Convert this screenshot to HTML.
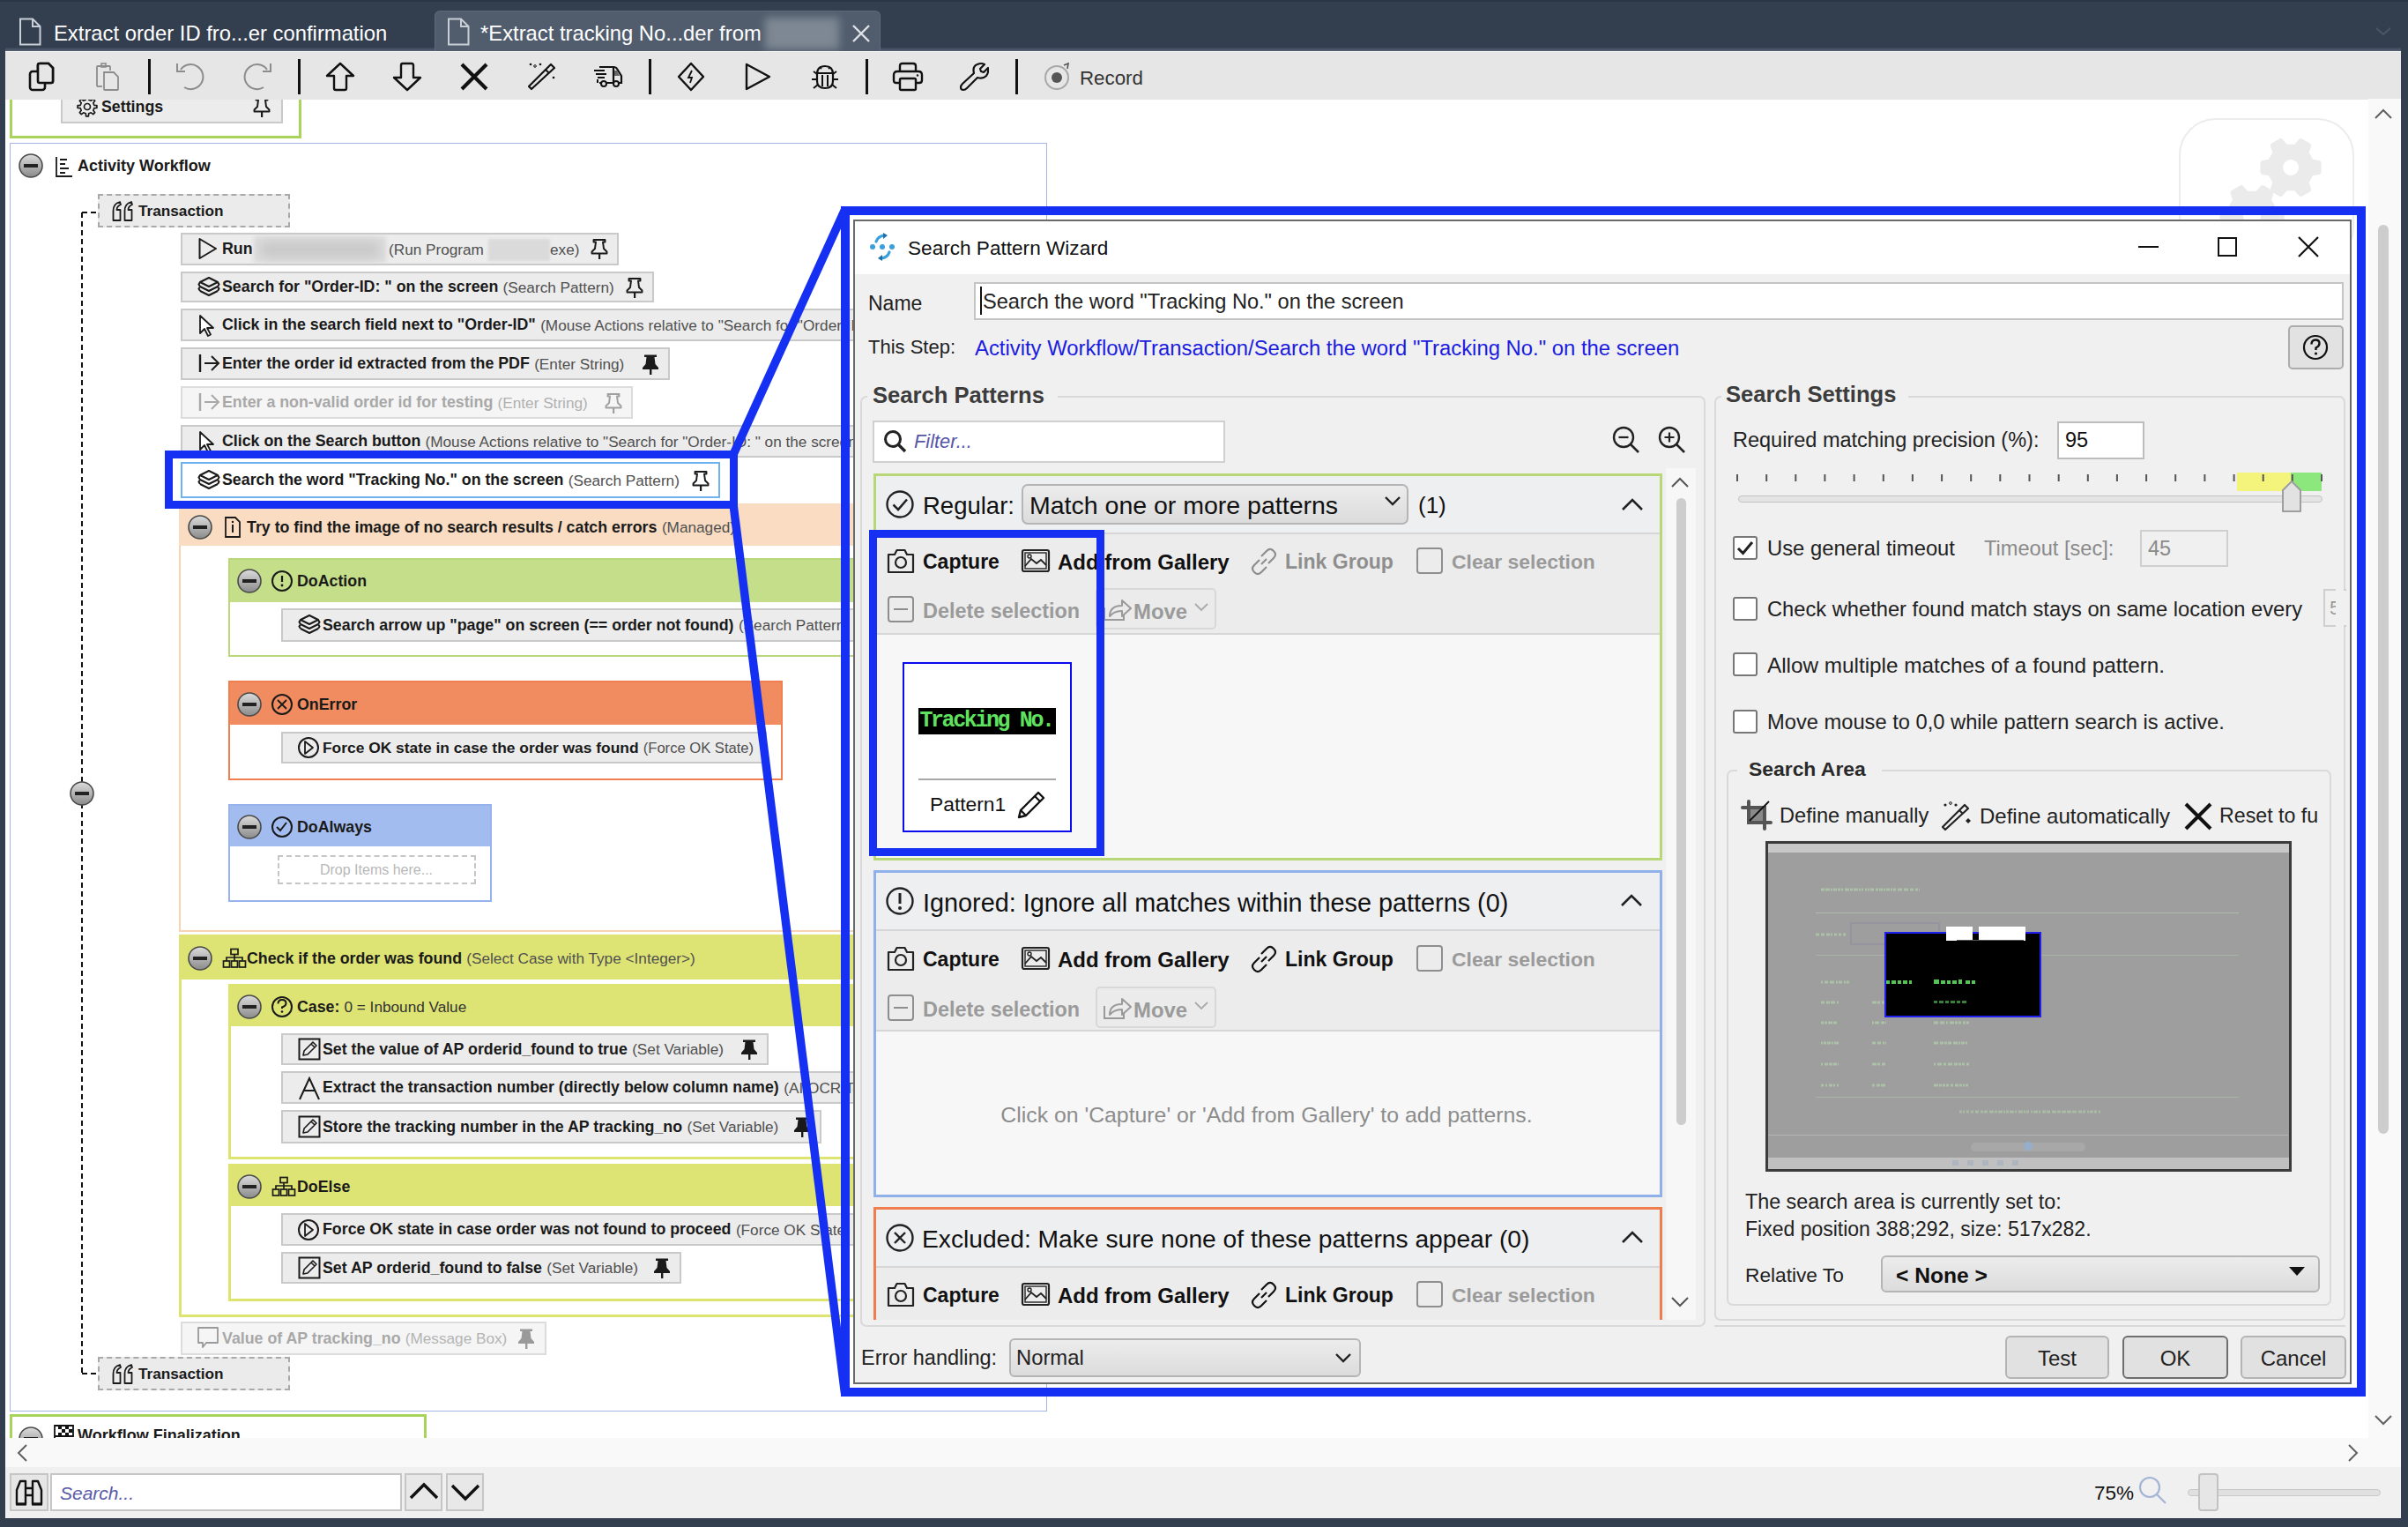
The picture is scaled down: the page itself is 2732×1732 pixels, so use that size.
<!DOCTYPE html><html><head><meta charset="utf-8"><style>
html,body{margin:0;padding:0;width:2732px;height:1732px;overflow:hidden;background:#333e4f;font-family:"Liberation Sans",sans-serif;}
body>div,body>svg{position:absolute;box-sizing:border-box;}
.t{white-space:nowrap;}
</style></head><body>
<div style="left:0px;top:0px;width:2732px;height:1732px;background:#333e4f"></div>
<div style="left:0px;top:0px;width:2732px;height:2px;background:#2b3545"></div>
<div style="left:6px;top:54px;width:2718px;height:5px;background:linear-gradient(#3a4658,#5d697b)"></div>
<div style="left:493px;top:12px;width:506px;height:46px;background:#515d6d;border-radius:6px 6px 0 0;border:1px solid #5e6a7a;border-bottom:none"></div>
<svg style="position:absolute;left:21px;top:20px;" width="26" height="32" viewBox="0 0 26 32"><path d="M2 1.5 H16 L24.5 10 V30.5 H2 Z" fill="none" stroke="#c9cfd6" stroke-width="2"/><path d="M16 1.5 V10 H24.5" fill="none" stroke="#c9cfd6" stroke-width="2"/></svg>
<svg style="position:absolute;left:507px;top:20px;" width="26" height="32" viewBox="0 0 26 32"><path d="M2 1.5 H16 L24.5 10 V30.5 H2 Z" fill="none" stroke="#c9cfd6" stroke-width="2"/><path d="M16 1.5 V10 H24.5" fill="none" stroke="#c9cfd6" stroke-width="2"/></svg>
<div class="t" style="left:61px;top:23.0px;height:30px;line-height:30px;font-size:23.8px;font-weight:400;color:#fff;">Extract order ID fro...er confirmation</div>
<div class="t" style="left:545px;top:23.0px;height:30px;line-height:30px;font-size:23.8px;font-weight:400;color:#fff;">*Extract tracking No...der from</div>
<div style="left:868px;top:20px;width:84px;height:36px;background:#8a939e;filter:blur(5px);opacity:.8"></div>
<svg style="position:absolute;left:965px;top:26px;" width="24" height="24" viewBox="0 0 24 24"><path d="M3 3 L21 21 M21 3 L3 21" stroke="#dfe3e8" stroke-width="2.4"/></svg>
<svg style="position:absolute;left:2694px;top:30px;" width="20" height="12" viewBox="0 0 20 12"><path d="M2 2 L10 9 L18 2" fill="none" stroke="#4b5666" stroke-width="2"/></svg>
<div style="left:6px;top:58px;width:2718px;height:1664px;background:#ffffff"></div>
<div style="left:11px;top:100px;width:331px;height:57px;border:3px solid #a8d45c;border-top:none;background:#fff"></div>
<div style="left:69px;top:100px;width:252px;height:40px;background:#ececec;border:2px solid #c9c9c9;border-top:none"></div>
<svg style="position:absolute;left:87px;top:109px;" width="24" height="24" viewBox="0 0 24 24"><polygon points="19.8,10.3 22.9,10.6 22.9,13.4 19.8,13.7 18.8,16.3 20.7,18.7 18.7,20.7 16.3,18.8 13.7,19.8 13.4,22.9 10.6,22.9 10.3,19.8 7.7,18.8 5.3,20.7 3.3,18.7 5.2,16.3 4.2,13.7 1.1,13.4 1.1,10.6 4.2,10.3 5.2,7.7 3.3,5.3 5.3,3.3 7.7,5.2 10.3,4.2 10.6,1.1 13.4,1.1 13.7,4.2 16.3,5.2 18.7,3.3 20.7,5.3 18.8,7.7" fill="none" stroke="#1a1a1a" stroke-width="1.7" stroke-linejoin="round"/><circle cx="12" cy="12" r="3.5" fill="none" stroke="#1a1a1a" stroke-width="1.7"/></svg>
<div class="t" style="left:115px;top:109.5px;height:23px;line-height:23px;font-size:17.8px;font-weight:700;color:#1a1a1a;">Settings</div>
<svg style="position:absolute;left:287px;top:109px;" width="20" height="25" viewBox="0 0 20 25"><path d="M3.5 2 H16.5 V4.5 H14 L15 12 L18.5 15.5 V17.5 H1.5 V15.5 L5 12 L6 4.5 H3.5 Z" fill="none" stroke="#1a1a1a" stroke-width="1.9" stroke-linejoin="round"/><rect x="9" y="17" width="2.2" height="7" fill="#1a1a1a"/></svg>
<div style="left:11px;top:162px;width:1177px;height:1439px;border:1.5px solid #a3b6e2"></div>
<svg style="position:absolute;left:21px;top:174px;" width="28" height="28" viewBox="0 0 28 28"><defs><linearGradient id="mg" x1="0" y1="0" x2="0" y2="1"><stop offset="0" stop-color="#dcdcdc"/><stop offset="1" stop-color="#8a8a8a"/></linearGradient></defs><circle cx="14" cy="14" r="13" fill="url(#mg)" stroke="#4a4a4a" stroke-width="1.6"/><rect x="6" y="12" width="16" height="4" fill="#222"/></svg>
<svg style="position:absolute;left:62px;top:176px;" width="22" height="26" viewBox="0 0 22 26"><path d="M2 2 V24 H20 M6 5 H14 M6 10 H12 M6 15 H16 M6 20 H12" fill="none" stroke="#1a1a1a" stroke-width="1.8"/></svg>
<div class="t" style="left:88px;top:176.5px;height:23px;line-height:23px;font-size:18px;font-weight:700;color:#1a1a1a;">Activity Workflow</div>
<div style="left:111px;top:220px;width:218px;height:38px;background:#ebebeb;border:2px dashed #a9a9a9"></div>
<svg style="position:absolute;left:126px;top:226px;" width="28" height="26" viewBox="0 0 28 26"><path d="M2.5 24 V13 Q2.5 5 10 3 L11 6 Q6.5 8 6.5 12 H10.5 V24 Z M15.5 24 V13 Q15.5 5 23 3 L24 6 Q19.5 8 19.5 12 H23.5 V24 Z" fill="none" stroke="#1a1a1a" stroke-width="1.8" stroke-linejoin="round"/></svg>
<div class="t" style="left:157px;top:228.0px;height:22px;line-height:22px;font-size:17.2px;font-weight:700;color:#1a1a1a;">Transaction</div>
<div style="left:111px;top:1539px;width:218px;height:38px;background:#ebebeb;border:2px dashed #a9a9a9"></div>
<svg style="position:absolute;left:126px;top:1545px;" width="28" height="26" viewBox="0 0 28 26"><path d="M2.5 24 V13 Q2.5 5 10 3 L11 6 Q6.5 8 6.5 12 H10.5 V24 Z M15.5 24 V13 Q15.5 5 23 3 L24 6 Q19.5 8 19.5 12 H23.5 V24 Z" fill="none" stroke="#1a1a1a" stroke-width="1.8" stroke-linejoin="round"/></svg>
<div class="t" style="left:157px;top:1547.0px;height:22px;line-height:22px;font-size:17.2px;font-weight:700;color:#1a1a1a;">Transaction</div>
<svg style="position:absolute;left:0;top:0" width="2732" height="1732"><path d="M93 241 V1558 M93 241 H111 M93 1558 H111" fill="none" stroke="#111" stroke-width="2" stroke-dasharray="6 4"/></svg>
<svg style="position:absolute;left:79px;top:886px;" width="28" height="28" viewBox="0 0 28 28"><defs><linearGradient id="mg" x1="0" y1="0" x2="0" y2="1"><stop offset="0" stop-color="#dcdcdc"/><stop offset="1" stop-color="#8a8a8a"/></linearGradient></defs><circle cx="14" cy="14" r="13" fill="url(#mg)" stroke="#4a4a4a" stroke-width="1.6"/><rect x="6" y="12" width="16" height="4" fill="#222"/></svg>
<div style="left:205px;top:264px;width:497px;height:37px;background:#ececec;border:2px solid #c9c9c9"></div>
<svg style="position:absolute;left:224px;top:269px;" width="24" height="26" viewBox="0 0 24 26"><path d="M2.5 2 L21 13 L2.5 24 Z" fill="none" stroke="#1a1a1a" stroke-width="2" stroke-linejoin="round"/></svg>
<div class="t" style="left:252px;top:271.0px;height:23px;line-height:23px;font-size:17.8px;font-weight:700;color:#1a1a1a;">Run</div>
<div style="left:288px;top:268px;width:150px;height:30px;background:#dcdcdc;filter:blur(2px)"></div>
<div style="left:296px;top:274px;width:134px;height:18px;background:#c4c4c4;filter:blur(6px);opacity:.8"></div>
<div class="t" style="left:441px;top:271.5px;height:22px;line-height:22px;font-size:17.2px;font-weight:400;color:#505050;">(Run Program</div>
<div style="left:554px;top:271px;width:70px;height:25px;background:#dadada;filter:blur(1.5px)"></div>
<div class="t" style="left:624px;top:271.5px;height:22px;line-height:22px;font-size:17.2px;font-weight:400;color:#505050;">exe)</div>
<svg style="position:absolute;left:670px;top:270px;" width="20" height="25" viewBox="0 0 20 25"><path d="M3.5 2 H16.5 V4.5 H14 L15 12 L18.5 15.5 V17.5 H1.5 V15.5 L5 12 L6 4.5 H3.5 Z" fill="none" stroke="#1a1a1a" stroke-width="1.9" stroke-linejoin="round"/><rect x="9" y="17" width="2.2" height="7" fill="#1a1a1a"/></svg>
<div style="left:205px;top:308px;width:537px;height:35px;background:#ececec;border:2px solid #c9c9c9"></div>
<svg style="position:absolute;left:224px;top:312.5px;" width="26" height="26" viewBox="0 0 26 26"><path d="M13 2 L23 7 L13 12 L3 7 Z M3 12 L13 17 L23 12 M3 17 L13 22 L23 17" fill="none" stroke="#1a1a1a" stroke-width="2" stroke-linejoin="round"/><path d="M3 7 L1.5 9.5 L3 12 M23 7 L24.5 9.5 L23 12 M3 12 L1.5 14.5 L3 17 M23 12 L24.5 14.5 L23 17" fill="none" stroke="#1a1a1a" stroke-width="2"/></svg>
<div class="t" style="left:252px;top:314.0px;height:23px;line-height:23px;font-size:17.8px;font-weight:700;color:#1a1a1a;">Search for &quot;Order-ID: &quot; on the screen</div>
<div class="t" style="left:570.621815625px;top:314.5px;height:22px;line-height:22px;font-size:17.2px;font-weight:400;color:#505050;">(Search Pattern)</div>
<svg style="position:absolute;left:710px;top:313.5px;" width="20" height="25" viewBox="0 0 20 25"><path d="M3.5 2 H16.5 V4.5 H14 L15 12 L18.5 15.5 V17.5 H1.5 V15.5 L5 12 L6 4.5 H3.5 Z" fill="none" stroke="#1a1a1a" stroke-width="1.9" stroke-linejoin="round"/><rect x="9" y="17" width="2.2" height="7" fill="#1a1a1a"/></svg>
<div style="left:205px;top:350px;width:945px;height:37px;background:#ececec;border:2px solid #c9c9c9"></div>
<svg style="position:absolute;left:224px;top:355.5px;" width="22" height="28" viewBox="0 0 22 28"><path d="M3 2 V22 L8 17 L12 25 L15 23.5 L11 16 L18 16 Z" fill="#fff" stroke="#1a1a1a" stroke-width="1.8" stroke-linejoin="round"/></svg>
<div class="t" style="left:252px;top:357.0px;height:23px;line-height:23px;font-size:17.8px;font-weight:700;color:#1a1a1a;">Click in the search field next to &quot;Order-ID&quot;</div>
<div class="t" style="left:613.148796875px;top:357.5px;height:22px;line-height:22px;font-size:17.2px;font-weight:400;color:#505050;">(Mouse Actions relative to &quot;Search for &quot;Order-ID: &quot; on the screen&quot;)</div>
<div style="left:205px;top:394px;width:555px;height:37px;background:#ececec;border:2px solid #c9c9c9"></div>
<svg style="position:absolute;left:224px;top:399.5px;" width="30" height="24" viewBox="0 0 30 24"><path d="M3 2 V22" stroke="#1a1a1a" stroke-width="2.4"/><path d="M8 12 H23 M16 4 L24 12 L16 20" fill="none" stroke="#1a1a1a" stroke-width="2"/></svg>
<div class="t" style="left:252px;top:401.0px;height:23px;line-height:23px;font-size:17.8px;font-weight:700;color:#1a1a1a;">Enter the order id extracted from the PDF</div>
<div class="t" style="left:606.1439406249999px;top:401.5px;height:22px;line-height:22px;font-size:17.2px;font-weight:400;color:#505050;">(Enter String)</div>
<svg style="position:absolute;left:728px;top:400.5px;" width="20" height="25" viewBox="0 0 20 25"><path d="M3 1.5 H17 V4 H14.5 L15.5 12 L19 16 V18 H1 V16 L4.5 12 L5.5 4 H3 Z" fill="#1a1a1a"/><rect x="9" y="17" width="2.4" height="7" fill="#1a1a1a"/></svg>
<div style="left:205px;top:438px;width:513px;height:37px;background:#f5f5f5;border:2px solid #dcdcdc"></div>
<svg style="position:absolute;left:224px;top:443.5px;" width="30" height="24" viewBox="0 0 30 24"><path d="M3 2 V22" stroke="#a8a8a8" stroke-width="2.4"/><path d="M8 12 H23 M16 4 L24 12 L16 20" fill="none" stroke="#a8a8a8" stroke-width="2"/></svg>
<div class="t" style="left:252px;top:445.0px;height:23px;line-height:23px;font-size:17.8px;font-weight:700;color:#a8a8a8;">Enter a non-valid order id for testing</div>
<div class="t" style="left:564.572596875px;top:445.5px;height:22px;line-height:22px;font-size:17.2px;font-weight:400;color:#b0b0b0;">(Enter String)</div>
<svg style="position:absolute;left:686px;top:444.5px;" width="20" height="25" viewBox="0 0 20 25"><path d="M3.5 2 H16.5 V4.5 H14 L15 12 L18.5 15.5 V17.5 H1.5 V15.5 L5 12 L6 4.5 H3.5 Z" fill="none" stroke="#a0a0a0" stroke-width="1.9" stroke-linejoin="round"/><rect x="9" y="17" width="2.2" height="7" fill="#a0a0a0"/></svg>
<div style="left:205px;top:482px;width:945px;height:37px;background:#ececec;border:2px solid #c9c9c9"></div>
<svg style="position:absolute;left:224px;top:487.5px;" width="22" height="28" viewBox="0 0 22 28"><path d="M3 2 V22 L8 17 L12 25 L15 23.5 L11 16 L18 16 Z" fill="#fff" stroke="#1a1a1a" stroke-width="1.8" stroke-linejoin="round"/></svg>
<div class="t" style="left:252px;top:489.0px;height:23px;line-height:23px;font-size:17.8px;font-weight:700;color:#1a1a1a;">Click on the Search button</div>
<div class="t" style="left:482.49095625px;top:489.5px;height:22px;line-height:22px;font-size:17.2px;font-weight:400;color:#505050;">(Mouse Actions relative to &quot;Search for &quot;Order-ID: &quot; on the screen&quot;)</div>
<div style="left:205px;top:524px;width:612px;height:41px;background:#ffffff;border:2px solid #6fb2f2"></div>
<svg style="position:absolute;left:224px;top:531.5px;" width="26" height="26" viewBox="0 0 26 26"><path d="M13 2 L23 7 L13 12 L3 7 Z M3 12 L13 17 L23 12 M3 17 L13 22 L23 17" fill="none" stroke="#1a1a1a" stroke-width="2" stroke-linejoin="round"/><path d="M3 7 L1.5 9.5 L3 12 M23 7 L24.5 9.5 L23 12 M3 12 L1.5 14.5 L3 17 M23 12 L24.5 14.5 L23 17" fill="none" stroke="#1a1a1a" stroke-width="2"/></svg>
<div class="t" style="left:252px;top:533.0px;height:23px;line-height:23px;font-size:17.8px;font-weight:700;color:#1a1a1a;">Search the word &quot;Tracking No.&quot; on the screen</div>
<div class="t" style="left:644.8119375px;top:533.5px;height:22px;line-height:22px;font-size:17.2px;font-weight:400;color:#505050;">(Search Pattern)</div>
<svg style="position:absolute;left:785px;top:532.5px;" width="20" height="25" viewBox="0 0 20 25"><path d="M3.5 2 H16.5 V4.5 H14 L15 12 L18.5 15.5 V17.5 H1.5 V15.5 L5 12 L6 4.5 H3.5 Z" fill="none" stroke="#1a1a1a" stroke-width="1.9" stroke-linejoin="round"/><rect x="9" y="17" width="2.2" height="7" fill="#1a1a1a"/></svg>
<div style="left:203px;top:571px;width:947px;height:486px;border:2px solid #f7d3b3;border-right:none;background:#fff"></div>
<div style="left:203px;top:571px;width:947px;height:48px;background:#f9dcc1"></div>
<svg style="position:absolute;left:213px;top:584px;" width="28" height="28" viewBox="0 0 28 28"><defs><linearGradient id="mg" x1="0" y1="0" x2="0" y2="1"><stop offset="0" stop-color="#dcdcdc"/><stop offset="1" stop-color="#8a8a8a"/></linearGradient></defs><circle cx="14" cy="14" r="13" fill="url(#mg)" stroke="#4a4a4a" stroke-width="1.6"/><rect x="6" y="12" width="16" height="4" fill="#222"/></svg>
<svg style="position:absolute;left:254px;top:585px;" width="20" height="26" viewBox="0 0 20 26"><path d="M2 2 H13 L18 7 V24 H2 Z" fill="none" stroke="#1a1a1a" stroke-width="1.8"/><path d="M10 10 V19" stroke="#1a1a1a" stroke-width="2"/><circle cx="10" cy="7" r="1.2" fill="#1a1a1a"/></svg>
<div class="t" style="left:280px;top:586.5px;height:23px;line-height:23px;font-size:17.8px;font-weight:700;color:#1a1a1a;">Try to find the image of no search results / catch errors</div>
<div class="t" style="left:750.89553125px;top:587.0px;height:22px;line-height:22px;font-size:17.2px;font-weight:400;color:#505050;">(Managed)</div>
<div style="left:259px;top:633px;width:891px;height:112px;border:2px solid #b9d87c;background:#fff;border-right:none;"></div>
<div style="left:259px;top:633px;width:891px;height:50px;background:#c5de89;border:2px solid #b9d87c;border-bottom:none;border-right:none;"></div>
<svg style="position:absolute;left:269px;top:645px;" width="28" height="28" viewBox="0 0 28 28"><defs><linearGradient id="mg" x1="0" y1="0" x2="0" y2="1"><stop offset="0" stop-color="#dcdcdc"/><stop offset="1" stop-color="#8a8a8a"/></linearGradient></defs><circle cx="14" cy="14" r="13" fill="url(#mg)" stroke="#4a4a4a" stroke-width="1.6"/><rect x="6" y="12" width="16" height="4" fill="#222"/></svg>
<svg style="position:absolute;left:307px;top:646px;" width="26" height="26" viewBox="0 0 26 26"><circle cx="13" cy="13" r="11" fill="none" stroke="#1a1a1a" stroke-width="2"/><path d="M13 7 V14" stroke="#1a1a1a" stroke-width="2.2"/><circle cx="13" cy="18" r="1.4" fill="#1a1a1a"/></svg>
<div class="t" style="left:337px;top:647.5px;height:23px;line-height:23px;font-size:17.8px;font-weight:700;color:#1a1a1a;">DoAction</div>
<div style="left:319px;top:690px;width:831px;height:38px;background:#ececec;border:2px solid #c9c9c9"></div>
<svg style="position:absolute;left:338px;top:696.0px;" width="26" height="26" viewBox="0 0 26 26"><path d="M13 2 L23 7 L13 12 L3 7 Z M3 12 L13 17 L23 12 M3 17 L13 22 L23 17" fill="none" stroke="#1a1a1a" stroke-width="2" stroke-linejoin="round"/><path d="M3 7 L1.5 9.5 L3 12 M23 7 L24.5 9.5 L23 12 M3 12 L1.5 14.5 L3 17 M23 12 L24.5 14.5 L23 17" fill="none" stroke="#1a1a1a" stroke-width="2"/></svg>
<div class="t" style="left:366px;top:697.5px;height:23px;line-height:23px;font-size:17.8px;font-weight:700;color:#1a1a1a;">Search arrow up &quot;page&quot; on screen (== order not found)</div>
<div class="t" style="left:837.9040125px;top:698.0px;height:22px;line-height:22px;font-size:17.2px;font-weight:400;color:#505050;">(Search Pattern)</div>
<div style="left:259px;top:772px;width:629px;height:113px;border:2px solid #f07e4f;background:#fff;"></div>
<div style="left:259px;top:772px;width:629px;height:50px;background:#f08c5f;border:2px solid #f07e4f;border-bottom:none;"></div>
<svg style="position:absolute;left:269px;top:785px;" width="28" height="28" viewBox="0 0 28 28"><defs><linearGradient id="mg" x1="0" y1="0" x2="0" y2="1"><stop offset="0" stop-color="#dcdcdc"/><stop offset="1" stop-color="#8a8a8a"/></linearGradient></defs><circle cx="14" cy="14" r="13" fill="url(#mg)" stroke="#4a4a4a" stroke-width="1.6"/><rect x="6" y="12" width="16" height="4" fill="#222"/></svg>
<svg style="position:absolute;left:307px;top:786px;" width="26" height="26" viewBox="0 0 26 26"><circle cx="13" cy="13" r="11" fill="none" stroke="#1a1a1a" stroke-width="2"/><path d="M8 8 L18 18 M18 8 L8 18" stroke="#1a1a1a" stroke-width="1.8"/></svg>
<div class="t" style="left:337px;top:787.5px;height:23px;line-height:23px;font-size:17.8px;font-weight:700;color:#1a1a1a;">OnError</div>
<div style="left:319px;top:830px;width:551px;height:36px;background:#ececec;border:2px solid #c9c9c9"></div>
<svg style="position:absolute;left:337px;top:835px;" width="26" height="26" viewBox="0 0 26 26"><circle cx="13" cy="13" r="11" fill="none" stroke="#1a1a1a" stroke-width="2"/><path d="M9 6 L18 13 L9 20 Z" fill="none" stroke="#1a1a1a" stroke-width="1.8" stroke-linejoin="round"/></svg>
<div class="t" style="left:366px;top:837.0px;height:22px;line-height:22px;font-size:17.4px;font-weight:700;color:#1a1a1a;">Force OK state in case the order was found</div>
<div class="t" style="left:729.7232937499999px;top:837.5px;height:21px;line-height:21px;font-size:16.6px;font-weight:400;color:#505050;">(Force OK State)</div>
<div style="left:259px;top:912px;width:299px;height:111px;border:2px solid #97b3ee;background:#fff;"></div>
<div style="left:259px;top:912px;width:299px;height:48px;background:#a3bcf0;border:2px solid #97b3ee;border-bottom:none;"></div>
<svg style="position:absolute;left:269px;top:924px;" width="28" height="28" viewBox="0 0 28 28"><defs><linearGradient id="mg" x1="0" y1="0" x2="0" y2="1"><stop offset="0" stop-color="#dcdcdc"/><stop offset="1" stop-color="#8a8a8a"/></linearGradient></defs><circle cx="14" cy="14" r="13" fill="url(#mg)" stroke="#4a4a4a" stroke-width="1.6"/><rect x="6" y="12" width="16" height="4" fill="#222"/></svg>
<svg style="position:absolute;left:307px;top:925px;" width="26" height="26" viewBox="0 0 26 26"><circle cx="13" cy="13" r="11" fill="none" stroke="#1a1a1a" stroke-width="2"/><path d="M7 13 L11 17 L18 8" fill="none" stroke="#1a1a1a" stroke-width="2"/></svg>
<div class="t" style="left:337px;top:926.5px;height:23px;line-height:23px;font-size:17.8px;font-weight:700;color:#1a1a1a;">DoAlways</div>
<div style="left:315px;top:970px;width:225px;height:33px;border:2px dashed #c6c6c6;background:#fff"></div>
<div class="t" style="left:-573px;width:2000px;text-align:center;top:976.5px;height:20px;line-height:20px;font-size:16px;font-weight:400;color:#b8b8b8;">Drop Items here...</div>
<div style="left:203px;top:1060px;width:947px;height:434px;border:3px solid #dde46f;border-right:none;background:#fff"></div>
<div style="left:203px;top:1060px;width:947px;height:51px;background:#dee474"></div>
<svg style="position:absolute;left:213px;top:1073px;" width="28" height="28" viewBox="0 0 28 28"><defs><linearGradient id="mg" x1="0" y1="0" x2="0" y2="1"><stop offset="0" stop-color="#dcdcdc"/><stop offset="1" stop-color="#8a8a8a"/></linearGradient></defs><circle cx="14" cy="14" r="13" fill="url(#mg)" stroke="#4a4a4a" stroke-width="1.6"/><rect x="6" y="12" width="16" height="4" fill="#222"/></svg>
<svg style="position:absolute;left:252px;top:1075px;" width="28" height="24" viewBox="0 0 28 24"><rect x="10" y="1.5" width="8" height="6" fill="none" stroke="#1a1a1a" stroke-width="1.7"/><path d="M14 7.5 V11 M5 15 V11 H23 V15 M14 11 V15" fill="none" stroke="#1a1a1a" stroke-width="1.7"/><rect x="1.5" y="15" width="7" height="7" fill="none" stroke="#1a1a1a" stroke-width="1.7"/><rect x="10.5" y="15" width="7" height="7" fill="none" stroke="#1a1a1a" stroke-width="1.7"/><rect x="19.5" y="15" width="7" height="7" fill="none" stroke="#1a1a1a" stroke-width="1.7"/></svg>
<div class="t" style="left:280px;top:1075.5px;height:23px;line-height:23px;font-size:17.8px;font-weight:700;color:#1a1a1a;">Check if the order was found</div>
<div class="t" style="left:529.290259375px;top:1076.0px;height:22px;line-height:22px;font-size:17.2px;font-weight:400;color:#505050;">(Select Case with Type &lt;Integer&gt;)</div>
<div style="left:259px;top:1116px;width:891px;height:199px;border:3px solid #dde46f;background:#fff;border-right:none;"></div>
<div style="left:259px;top:1116px;width:891px;height:48px;background:#dee474;border:3px solid #dde46f;border-bottom:none;border-right:none;"></div>
<svg style="position:absolute;left:269px;top:1128px;" width="28" height="28" viewBox="0 0 28 28"><defs><linearGradient id="mg" x1="0" y1="0" x2="0" y2="1"><stop offset="0" stop-color="#dcdcdc"/><stop offset="1" stop-color="#8a8a8a"/></linearGradient></defs><circle cx="14" cy="14" r="13" fill="url(#mg)" stroke="#4a4a4a" stroke-width="1.6"/><rect x="6" y="12" width="16" height="4" fill="#222"/></svg>
<svg style="position:absolute;left:307px;top:1129px;" width="26" height="26" viewBox="0 0 26 26"><circle cx="13" cy="13" r="11" fill="none" stroke="#1a1a1a" stroke-width="2"/><path d="M8.5 9.5 Q8.5 5 13 5 Q17.5 5 17.5 9 Q17.5 12 13 13.5 V15" fill="none" stroke="#1a1a1a" stroke-width="2"/><circle cx="13" cy="18.5" r="1.3" fill="#1a1a1a"/></svg>
<div class="t" style="left:337px;top:1130.5px;height:23px;line-height:23px;font-size:17.8px;font-weight:700;color:#1a1a1a;">Case:</div>
<div class="t" style="left:390.48108125px;top:1131.0px;height:22px;line-height:22px;font-size:17.2px;font-weight:400;color:#333;">0 = Inbound Value</div>
<div style="left:319px;top:1172px;width:553px;height:36px;background:#ececec;border:2px solid #c9c9c9"></div>
<svg style="position:absolute;left:338px;top:1177.0px;" width="26" height="26" viewBox="0 0 26 26"><rect x="1.5" y="1.5" width="23" height="23" fill="none" stroke="#1a1a1a" stroke-width="2"/><path d="M6 20 L7 15 L17 5 L21 9 L11 19 Z M15 7 L19 11" fill="none" stroke="#1a1a1a" stroke-width="1.6" stroke-linejoin="round"/></svg>
<div class="t" style="left:366px;top:1178.5px;height:23px;line-height:23px;font-size:17.8px;font-weight:700;color:#1a1a1a;">Set the value of AP orderid_found to true</div>
<div class="t" style="left:717.145753125px;top:1179.0px;height:22px;line-height:22px;font-size:17.2px;font-weight:400;color:#505050;">(Set Variable)</div>
<svg style="position:absolute;left:840px;top:1178.0px;" width="20" height="25" viewBox="0 0 20 25"><path d="M3 1.5 H17 V4 H14.5 L15.5 12 L19 16 V18 H1 V16 L4.5 12 L5.5 4 H3 Z" fill="#1a1a1a"/><rect x="9" y="17" width="2.4" height="7" fill="#1a1a1a"/></svg>
<div style="left:319px;top:1215px;width:831px;height:37px;background:#ececec;border:2px solid #c9c9c9"></div>
<svg style="position:absolute;left:338px;top:1220.5px;" width="26" height="28" viewBox="0 0 26 28"><path d="M2 26 L13 2 L24 26 M7 16 H19" fill="none" stroke="#1a1a1a" stroke-width="2"/></svg>
<div class="t" style="left:366px;top:1222.0px;height:23px;line-height:23px;font-size:17.8px;font-weight:700;color:#1a1a1a;">Extract the transaction number (directly below column name)</div>
<div class="t" style="left:889.287884375px;top:1222.5px;height:22px;line-height:22px;font-size:17.2px;font-weight:400;color:#505050;">(AI OCR Text)</div>
<div style="left:319px;top:1259px;width:613px;height:38px;background:#ececec;border:2px solid #c9c9c9"></div>
<svg style="position:absolute;left:338px;top:1265.0px;" width="26" height="26" viewBox="0 0 26 26"><rect x="1.5" y="1.5" width="23" height="23" fill="none" stroke="#1a1a1a" stroke-width="2"/><path d="M6 20 L7 15 L17 5 L21 9 L11 19 Z M15 7 L19 11" fill="none" stroke="#1a1a1a" stroke-width="1.6" stroke-linejoin="round"/></svg>
<div class="t" style="left:366px;top:1266.5px;height:23px;line-height:23px;font-size:17.8px;font-weight:700;color:#1a1a1a;">Store the tracking number in the AP tracking_no</div>
<div class="t" style="left:779.489140625px;top:1267.0px;height:22px;line-height:22px;font-size:17.2px;font-weight:400;color:#505050;">(Set Variable)</div>
<svg style="position:absolute;left:900px;top:1266.0px;" width="20" height="25" viewBox="0 0 20 25"><path d="M3 1.5 H17 V4 H14.5 L15.5 12 L19 16 V18 H1 V16 L4.5 12 L5.5 4 H3 Z" fill="#1a1a1a"/><rect x="9" y="17" width="2.4" height="7" fill="#1a1a1a"/></svg>
<div style="left:259px;top:1320px;width:891px;height:156px;border:3px solid #dde46f;background:#fff;border-right:none;"></div>
<div style="left:259px;top:1320px;width:891px;height:48px;background:#dee474;border:3px solid #dde46f;border-bottom:none;border-right:none;"></div>
<svg style="position:absolute;left:269px;top:1332px;" width="28" height="28" viewBox="0 0 28 28"><defs><linearGradient id="mg" x1="0" y1="0" x2="0" y2="1"><stop offset="0" stop-color="#dcdcdc"/><stop offset="1" stop-color="#8a8a8a"/></linearGradient></defs><circle cx="14" cy="14" r="13" fill="url(#mg)" stroke="#4a4a4a" stroke-width="1.6"/><rect x="6" y="12" width="16" height="4" fill="#222"/></svg>
<svg style="position:absolute;left:308px;top:1334px;" width="28" height="24" viewBox="0 0 28 24"><rect x="10" y="1.5" width="8" height="6" fill="none" stroke="#1a1a1a" stroke-width="1.7"/><path d="M14 7.5 V11 M5 15 V11 H23 V15 M14 11 V15" fill="none" stroke="#1a1a1a" stroke-width="1.7"/><rect x="1.5" y="15" width="7" height="7" fill="none" stroke="#1a1a1a" stroke-width="1.7"/><rect x="10.5" y="15" width="7" height="7" fill="none" stroke="#1a1a1a" stroke-width="1.7"/><rect x="19.5" y="15" width="7" height="7" fill="none" stroke="#1a1a1a" stroke-width="1.7"/></svg>
<div class="t" style="left:337px;top:1334.5px;height:23px;line-height:23px;font-size:17.8px;font-weight:700;color:#1a1a1a;">DoElse</div>
<div style="left:319px;top:1376px;width:831px;height:37px;background:#ececec;border:2px solid #c9c9c9"></div>
<svg style="position:absolute;left:337px;top:1381.5px;" width="26" height="26" viewBox="0 0 26 26"><circle cx="13" cy="13" r="11" fill="none" stroke="#1a1a1a" stroke-width="2"/><path d="M9 6 L18 13 L9 20 Z" fill="none" stroke="#1a1a1a" stroke-width="1.8" stroke-linejoin="round"/></svg>
<div class="t" style="left:366px;top:1383.0px;height:23px;line-height:23px;font-size:17.8px;font-weight:700;color:#1a1a1a;">Force OK state in case order was not found to proceed</div>
<div class="t" style="left:834.879403125px;top:1383.5px;height:22px;line-height:22px;font-size:17.2px;font-weight:400;color:#505050;">(Force OK State)</div>
<div style="left:319px;top:1420px;width:454px;height:36px;background:#ececec;border:2px solid #c9c9c9"></div>
<svg style="position:absolute;left:338px;top:1425.0px;" width="26" height="26" viewBox="0 0 26 26"><rect x="1.5" y="1.5" width="23" height="23" fill="none" stroke="#1a1a1a" stroke-width="2"/><path d="M6 20 L7 15 L17 5 L21 9 L11 19 Z M15 7 L19 11" fill="none" stroke="#1a1a1a" stroke-width="1.6" stroke-linejoin="round"/></svg>
<div class="t" style="left:366px;top:1426.5px;height:23px;line-height:23px;font-size:17.8px;font-weight:700;color:#1a1a1a;">Set AP orderid_found to false</div>
<div class="t" style="left:620.23615625px;top:1427.0px;height:22px;line-height:22px;font-size:17.2px;font-weight:400;color:#505050;">(Set Variable)</div>
<svg style="position:absolute;left:741px;top:1426.0px;" width="20" height="25" viewBox="0 0 20 25"><path d="M3 1.5 H17 V4 H14.5 L15.5 12 L19 16 V18 H1 V16 L4.5 12 L5.5 4 H3 Z" fill="#1a1a1a"/><rect x="9" y="17" width="2.4" height="7" fill="#1a1a1a"/></svg>
<div style="left:205px;top:1499px;width:415px;height:38px;background:#f5f5f5;border:2px solid #dcdcdc"></div>
<svg style="position:absolute;left:222px;top:1503px;" width="28" height="28" viewBox="0 0 28 28"><path d="M3 3 H25 V20 H12 L8 25 V20 H3 Z" fill="none" stroke="#9a9a9a" stroke-width="1.8" stroke-linejoin="round"/></svg>
<div class="t" style="left:252px;top:1506.5px;height:23px;line-height:23px;font-size:17.8px;font-weight:700;color:#a8a8a8;">Value of AP tracking_no</div>
<div class="t" style="left:459.78038125px;top:1507.0px;height:22px;line-height:22px;font-size:17.2px;font-weight:400;color:#b4b4b4;">(Message Box)</div>
<svg style="position:absolute;left:587px;top:1506px;" width="20" height="25" viewBox="0 0 20 25"><path d="M3 1.5 H17 V4 H14.5 L15.5 12 L19 16 V18 H1 V16 L4.5 12 L5.5 4 H3 Z" fill="#9a9a9a"/><rect x="9" y="17" width="2.4" height="7" fill="#9a9a9a"/></svg>
<div style="left:11px;top:1604px;width:473px;height:36px;border:3px solid #a8d45c;border-bottom:none;background:#fff"></div>
<svg style="position:absolute;left:21px;top:1618px;" width="28" height="28" viewBox="0 0 28 28"><defs><linearGradient id="mg" x1="0" y1="0" x2="0" y2="1"><stop offset="0" stop-color="#dcdcdc"/><stop offset="1" stop-color="#8a8a8a"/></linearGradient></defs><circle cx="14" cy="14" r="13" fill="url(#mg)" stroke="#4a4a4a" stroke-width="1.6"/><rect x="6" y="12" width="16" height="4" fill="#222"/></svg>
<svg style="position:absolute;left:60px;top:1614px;" width="26" height="20" viewBox="0 0 26 20"><path d="M2 2 V20 M2 3 H23 V15 H2" fill="none" stroke="#111" stroke-width="1.8"/><path d="M6 3 H10 V7 H6 Z M14 3 H18 V7 H14 Z M10 7 H14 V11 H10 Z M18 7 H22 V11 H18 Z M6 11 H10 V15 H6 Z M14 11 H18 V15 H14 Z" fill="#111"/></svg>
<div class="t" style="left:88px;top:1616.5px;height:23px;line-height:23px;font-size:18px;font-weight:700;color:#1a1a1a;">Workflow Finalization</div>
<div style="left:6px;top:59px;width:2718px;height:54px;background:#e6e6e6"></div>
<svg style="position:absolute;left:32px;top:70px;" width="30" height="34" viewBox="0 0 30 34"><rect x="2" y="11" width="17" height="21" rx="3" fill="none" stroke="#111" stroke-width="2.6"/><path d="M11 11 V4 Q11 2 13 2 H23 L28 7 V22 Q28 24 26 24 H19" fill="#e6e6e6" stroke="#111" stroke-width="2.6"/><path d="M11 8 V4 Q11 2 13 2 H23 L28 7 V22 Q28 24 26 24 H13 Q11 24 11 22 Z" fill="#e6e6e6" stroke="#111" stroke-width="2.6"/></svg>
<svg style="position:absolute;left:107px;top:70px;" width="30" height="34" viewBox="0 0 30 34"><path d="M3 28 V6 Q3 5 4 5 H17 Q18 5 18 6 V10" fill="none" stroke="#8c8c8c" stroke-width="1.8"/><rect x="8" y="2" width="5" height="4" fill="none" stroke="#8c8c8c" stroke-width="1.6"/><path d="M11 12 H22 L27 17 V31 Q27 32 26 32 H12 Q11 32 11 31 Z" fill="#e6e6e6" stroke="#8c8c8c" stroke-width="1.8"/><path d="M3 28 H9" stroke="#8c8c8c" stroke-width="1.8"/></svg>
<div style="left:167.5px;top:67px;width:3.0px;height:40px;background:#111"></div>
<div style="left:337.5px;top:67px;width:3.0px;height:40px;background:#111"></div>
<div style="left:735.5px;top:67px;width:3.0px;height:40px;background:#111"></div>
<div style="left:981.5px;top:67px;width:3.0px;height:40px;background:#111"></div>
<div style="left:1151.5px;top:67px;width:3.0px;height:40px;background:#111"></div>
<svg style="position:absolute;left:199px;top:70px;" width="34" height="34" viewBox="0 0 34 34"><path d="M6 9 A14 14 0 1 1 10 29" fill="none" stroke="#8c8c8c" stroke-width="2"/><path d="M2 2 V11 H11" fill="none" stroke="#8c8c8c" stroke-width="2"/></svg>
<svg style="position:absolute;left:275px;top:70px;" width="34" height="34" viewBox="0 0 34 34"><path d="M28 9 A14 14 0 1 0 24 29" fill="none" stroke="#8c8c8c" stroke-width="2"/><path d="M32 2 V11 H23" fill="none" stroke="#8c8c8c" stroke-width="2"/></svg>
<svg style="position:absolute;left:369px;top:70px;" width="34" height="34" viewBox="0 0 34 34"><path d="M17 2 L32 16 H24 V30 Q24 32 22 32 H12 Q10 32 10 30 V16 H2 Z" fill="none" stroke="#111" stroke-width="2.4" stroke-linejoin="round"/></svg>
<svg style="position:absolute;left:445px;top:70px;" width="34" height="34" viewBox="0 0 34 34"><path d="M17 32 L32 18 H24 V4 Q24 2 22 2 H12 Q10 2 10 4 V18 H2 Z" fill="none" stroke="#111" stroke-width="2.4" stroke-linejoin="round"/></svg>
<svg style="position:absolute;left:521px;top:70px;" width="34" height="34" viewBox="0 0 34 34"><path d="M3 3 L31 31 M31 3 L3 31" stroke="#111" stroke-width="4.2"/></svg>
<svg style="position:absolute;left:599px;top:70px;" width="34" height="34" viewBox="0 0 34 34"><path d="M4 31 L1 28 L26 3 L30 7 Z" fill="none" stroke="#111" stroke-width="2.2" stroke-linejoin="round"/><path d="M20 9 L24 13" stroke="#111" stroke-width="2"/><circle cx="3" cy="3" r="1.3" fill="#111"/><circle cx="8" cy="5" r="1.3" fill="none" stroke="#111"/><circle cx="14" cy="3" r="1.3" fill="#111"/><circle cx="29" cy="18" r="1.3" fill="#111"/></svg>
<svg style="position:absolute;left:672px;top:72px;" width="36" height="30" viewBox="0 0 36 30"><path d="M8 4 H24 Q27 4 28 6 L33 14 V22 H30" fill="none" stroke="#111" stroke-width="2.2"/><path d="M24 4 V22 H16" fill="none" stroke="#111" stroke-width="2.2"/><path d="M8 22 H10" stroke="#111" stroke-width="2.2"/><path d="M2 8 H14 M4 12 H16 M6 16 H14" stroke="#111" stroke-width="2"/><path d="M6 18 V22" stroke="#111" stroke-width="2"/><circle cx="13" cy="23" r="3" fill="#e6e6e6" stroke="#111" stroke-width="2"/><circle cx="27" cy="23" r="3" fill="#e6e6e6" stroke="#111" stroke-width="2"/><path d="M25 8 H28 L31 14 H25 Z" fill="#111" opacity=".6"/></svg>
<svg style="position:absolute;left:768px;top:70px;" width="32" height="34" viewBox="0 0 32 34"><path d="M16 2 L30 17 L16 32 L2 17 Z" fill="none" stroke="#111" stroke-width="2.4" stroke-linejoin="round"/><path d="M17 10 L13 18 H17 L15 24" fill="none" stroke="#111" stroke-width="1.8"/></svg>
<svg style="position:absolute;left:844px;top:70px;" width="32" height="34" viewBox="0 0 32 34"><path d="M3 3 L29 17 L3 31 Z" fill="none" stroke="#111" stroke-width="2.4" stroke-linejoin="round"/></svg>
<svg style="position:absolute;left:919px;top:70px;" width="34" height="34" viewBox="0 0 34 34"><path d="M8 14 Q8 5 17 5 Q26 5 26 14 V22 Q26 30 17 30 Q8 30 8 22 Z" fill="none" stroke="#111" stroke-width="2.2"/><path d="M8 13 H26 M14 15 V28 M20 15 V28 M11 6 L13 8 M23 6 L21 8 M2 20 H8 M26 20 H32 M4 30 L9 26 M30 30 L25 26 M4 11 L8 14 M30 11 L26 14" stroke="#111" stroke-width="2"/></svg>
<svg style="position:absolute;left:1012px;top:70px;" width="36" height="34" viewBox="0 0 36 34"><path d="M9 11 V5 Q9 2 12 2 H24 Q27 2 27 5 V11" fill="none" stroke="#111" stroke-width="2.4"/><path d="M9 24 H5 Q2 24 2 21 V15 Q2 11 6 11 H30 Q34 11 34 15 V21 Q34 24 31 24 H27" fill="none" stroke="#111" stroke-width="2.4"/><rect x="9" y="19" width="18" height="13" rx="1.5" fill="none" stroke="#111" stroke-width="2.4"/><circle cx="29" cy="15.5" r="1.2" fill="#111"/></svg>
<svg style="position:absolute;left:1088px;top:70px;" width="34" height="34" viewBox="0 0 34 34"><path d="M5 32 Q2 32 2 29 Q2 27 4 25 L17 13 Q15 5 21 3 Q25 1 29 3 L24 8 L25 11 L28 12 L33 7 Q34 12 31 16 Q27 20 21 18 L9 30 Q7 32 5 32 Z" fill="none" stroke="#111" stroke-width="2.2" stroke-linejoin="round"/></svg>
<svg style="position:absolute;left:1183px;top:70px;" width="32" height="34" viewBox="0 0 32 34"><circle cx="16" cy="18" r="13" fill="none" stroke="#a8a8a8" stroke-width="2"/><circle cx="16" cy="18" r="6" fill="#555"/><path d="M24 4 L29 2 L28 8" fill="none" stroke="#555" stroke-width="1.6"/></svg>
<div class="t" style="left:1225px;top:75.0px;height:28px;line-height:28px;font-size:22.3px;font-weight:400;color:#333;">Record</div>
<div style="left:2472px;top:134px;width:199px;height:166px;border:2px solid #ececec;border-radius:42px;background:transparent"></div>
<svg style="position:absolute;left:0;top:0" width="2732" height="1732"><polygon points="2622.1,183.4 2630.6,184.9 2630.6,195.1 2622.1,196.6 2616.3,206.7 2619.2,214.8 2610.4,219.9 2604.8,213.3 2593.2,213.3 2587.6,219.9 2578.8,214.8 2581.7,206.7 2575.9,196.6 2567.4,195.1 2567.4,184.9 2575.9,183.4 2581.7,173.3 2578.8,165.2 2587.6,160.1 2593.2,166.7 2604.8,166.7 2610.4,160.1 2619.2,165.2 2616.3,173.3" fill="#ebebeb" stroke="#ebebeb" stroke-width="6" stroke-linejoin="round"/><circle cx="2599" cy="190" r="9" fill="#fff"/></svg>
<svg style="position:absolute;left:0;top:0" width="2732" height="1732"><polygon points="2580.0,237.8 2588.6,239.6 2588.6,250.4 2580.0,252.2 2573.7,263.0 2576.5,271.4 2567.1,276.8 2561.3,270.2 2548.7,270.2 2542.9,276.8 2533.5,271.4 2536.3,263.0 2530.0,252.2 2521.4,250.4 2521.4,239.6 2530.0,237.8 2536.3,227.0 2533.5,218.6 2542.9,213.2 2548.7,219.8 2561.3,219.8 2567.1,213.2 2576.5,218.6 2573.7,227.0" fill="#ebebeb" stroke="#ebebeb" stroke-width="6" stroke-linejoin="round"/><circle cx="2555" cy="245" r="10" fill="#fff"/></svg>
<div style="left:2687px;top:112px;width:37px;height:1519px;background:#f9f9f9"></div>
<svg style="position:absolute;left:2693px;top:122px;" width="22" height="14" viewBox="0 0 22 14"><path d="M2 12 L11 3 L20 12" fill="none" stroke="#606060" stroke-width="2"/></svg>
<div style="left:2698px;top:255px;width:12px;height:1031px;background:#cdcdcd;border-radius:6px"></div>
<svg style="position:absolute;left:2693px;top:1604px;" width="22" height="14" viewBox="0 0 22 14"><path d="M2 2 L11 11 L20 2" fill="none" stroke="#606060" stroke-width="2"/></svg>
<div style="left:6px;top:1631px;width:2681px;height:33px;background:#f9f9f9"></div>
<svg style="position:absolute;left:18px;top:1637px;" width="14" height="22" viewBox="0 0 14 22"><path d="M12 2 L3 11 L12 20" fill="none" stroke="#606060" stroke-width="2"/></svg>
<svg style="position:absolute;left:2663px;top:1637px;" width="14" height="22" viewBox="0 0 14 22"><path d="M2 2 L11 11 L2 20" fill="none" stroke="#606060" stroke-width="2"/></svg>
<div style="left:2687px;top:1631px;width:37px;height:33px;background:#f9f9f9"></div>
<div style="left:6px;top:1664px;width:2718px;height:58px;background:#f0f0f0"></div>
<div style="left:11px;top:1671px;width:44px;height:43px;background:#e6e6e6;border:2px solid #c6c6c6"></div>
<svg style="position:absolute;left:14px;top:1676px;" width="38" height="34" viewBox="0 0 38 34"><path d="M5 30 V14 L9 4 H15 V30 Z M23 30 V4 H29 L33 14 V30 Z M15 12 H23 M15 20 H23" fill="none" stroke="#111" stroke-width="2.4" stroke-linejoin="round"/><path d="M4 30 H16 M22 30 H34" stroke="#111" stroke-width="3"/></svg>
<div style="left:57px;top:1671px;width:399px;height:43px;background:#fff;border:2px solid #c6c6c6"></div>
<div class="t" style="left:68px;top:1679.5px;height:27px;line-height:27px;font-size:21px;font-weight:400;color:#5a5aa8;font-style:italic">Search...</div>
<div style="left:459px;top:1671px;width:43px;height:43px;background:#e8e8e8;border:2px solid #c6c6c6"></div>
<svg style="position:absolute;left:463px;top:1680px;" width="36" height="22" viewBox="0 0 36 22"><path d="M3 19 L18 4 L33 19" fill="none" stroke="#111" stroke-width="3.4"/></svg>
<div style="left:506px;top:1671px;width:43px;height:43px;background:#e8e8e8;border:2px solid #c6c6c6"></div>
<svg style="position:absolute;left:510px;top:1682px;" width="36" height="22" viewBox="0 0 36 22"><path d="M3 3 L18 18 L33 3" fill="none" stroke="#111" stroke-width="3.4"/></svg>
<div class="t" style="left:2376px;top:1678.5px;height:29px;line-height:29px;font-size:22.5px;font-weight:400;color:#111;">75%</div>
<svg style="position:absolute;left:2424px;top:1672px;" width="38" height="38" viewBox="0 0 38 38"><circle cx="15" cy="15" r="11" fill="none" stroke="#a4b4d4" stroke-width="2.2"/><path d="M23 23 L33 33" stroke="#a4b4d4" stroke-width="2.2"/></svg>
<div style="left:2482px;top:1689px;width:219px;height:8px;background:#e0e0e0;border:1px solid #c8c8c8;border-radius:4px"></div>
<div style="left:2494px;top:1671px;width:23px;height:43px;background:#e6e6e6;border:2px solid #c2c2c2;border-radius:4px"></div>
<div style="left:968px;top:249px;width:1700px;height:1321px;background:#f0f0f0;border:2px solid #6a6a6a"></div>
<div style="left:970px;top:251px;width:1696px;height:60px;background:#ffffff"></div>
<svg style="position:absolute;left:986px;top:263px;" width="32" height="34" viewBox="0 0 32 34"><circle cx="4" cy="17" r="3" fill="#3aa0dc"/><circle cx="15" cy="17" r="3" fill="#3aa0dc"/><circle cx="26" cy="17" r="3" fill="#3aa0dc"/><path d="M8 11 Q10 5 17 4" fill="none" stroke="#3aa0dc" stroke-width="3.2" stroke-linecap="round"/><path d="M16 1 L21 4 L16 8 Z" fill="#1f6fa8"/><path d="M23 23 Q21 29 14 30" fill="none" stroke="#3aa0dc" stroke-width="3.2" stroke-linecap="round"/><path d="M15 33 L10 30 L15 26 Z" fill="#1f6fa8"/></svg>
<div class="t" style="left:1030px;top:266.5px;height:29px;line-height:29px;font-size:22.6px;font-weight:400;color:#111;">Search Pattern Wizard</div>
<div style="left:2426px;top:279px;width:23px;height:2px;background:#111"></div>
<div style="left:2516px;top:269px;width:22px;height:22px;border:2px solid #111"></div>
<svg style="position:absolute;left:2606px;top:267px;" width="26" height="26" viewBox="0 0 26 26"><path d="M2 2 L24 24 M24 2 L2 24" stroke="#111" stroke-width="2.2"/></svg>
<div class="t" style="left:985px;top:329.5px;height:29px;line-height:29px;font-size:23px;font-weight:400;color:#222;">Name</div>
<div style="left:1105px;top:320px;width:1554px;height:43px;background:#fff;border:2px solid #c4c4c4"></div>
<div style="left:1112px;top:325px;width:2px;height:32px;background:#111"></div>
<div class="t" style="left:1115px;top:326.5px;height:30px;line-height:30px;font-size:23.6px;font-weight:400;color:#222;">Search the word &quot;Tracking No.&quot; on the screen</div>
<div class="t" style="left:985px;top:380.0px;height:28px;line-height:28px;font-size:22px;font-weight:400;color:#222;">This Step:</div>
<div class="t" style="left:1106px;top:378.5px;height:31px;line-height:31px;font-size:23.85px;font-weight:400;color:#1c1ce0;">Activity Workflow/Transaction/Search the word &quot;Tracking No.&quot; on the screen</div>
<div style="left:2596px;top:369px;width:63px;height:50px;background:#e2e2e2;border:2px solid #acacac;border-radius:5px"></div>
<svg style="position:absolute;left:2611px;top:378px;" width="32" height="32" viewBox="0 0 32 32"><circle cx="16" cy="16" r="13" fill="none" stroke="#111" stroke-width="2.2"/><path d="M11.5 12.5 Q11.5 7.5 16 7.5 Q20.5 7.5 20.5 11.5 Q20.5 14.5 16.5 16.5 V19" fill="none" stroke="#111" stroke-width="2.4"/><circle cx="16.5" cy="23" r="1.6" fill="#111"/></svg>
<div style="left:976px;top:449px;width:959px;height:1056px;border:2px solid #d9d9d9;border-radius:7px"></div>
<div style="left:984px;top:430px;width:216px;height:35px;background:#f0f0f0"></div>
<div class="t" style="left:990px;top:431.5px;height:33px;line-height:33px;font-size:25.6px;font-weight:700;color:#3c3c3c;">Search Patterns</div>
<div style="left:990px;top:477px;width:400px;height:48px;background:#fff;border:2px solid #d0d0d0"></div>
<svg style="position:absolute;left:1000px;top:485px;" width="32" height="32" viewBox="0 0 32 32"><circle cx="13" cy="13" r="8.5" fill="none" stroke="#222" stroke-width="3"/><path d="M19.5 19.5 L27 27" stroke="#222" stroke-width="3.4"/></svg>
<div class="t" style="left:1037px;top:487.0px;height:28px;line-height:28px;font-size:21.8px;font-weight:400;color:#5656a8;font-style:italic">Filter...</div>
<svg style="position:absolute;left:1828px;top:482px;" width="34" height="34" viewBox="0 0 34 34"><circle cx="14" cy="14" r="11" fill="none" stroke="#222" stroke-width="2.4"/><path d="M22 22 L31 31" stroke="#222" stroke-width="2.6"/><path d="M8.5 14 H19.5" stroke="#222" stroke-width="2.2"/></svg>
<svg style="position:absolute;left:1880px;top:482px;" width="34" height="34" viewBox="0 0 34 34"><circle cx="14" cy="14" r="11" fill="none" stroke="#222" stroke-width="2.4"/><path d="M22 22 L31 31" stroke="#222" stroke-width="2.6"/><path d="M8.5 14 H19.5 M14 8.5 V19.5" stroke="#222" stroke-width="2.2"/></svg>
<div style="left:1890px;top:531px;width:34px;height:967px;background:#f7f7f7"></div>
<svg style="position:absolute;left:1895px;top:540px;" width="22" height="14" viewBox="0 0 22 14"><path d="M2 12 L11 3 L20 12" fill="none" stroke="#555" stroke-width="2"/></svg>
<div style="left:1902px;top:565px;width:11px;height:711px;background:#cdcdcd;border-radius:6px"></div>
<svg style="position:absolute;left:1895px;top:1470px;" width="22" height="14" viewBox="0 0 22 14"><path d="M2 2 L11 11 L20 2" fill="none" stroke="#555" stroke-width="2"/></svg>
<div style="left:991px;top:537px;width:895px;height:439px;border:3px solid #b8d777;background:#f7f7f7"></div>
<div style="left:994px;top:540px;width:889px;height:66px;background:#eeeff1;border-bottom:2px solid #d6d6d6"></div>
<div style="left:994px;top:606px;width:889px;height:114px;background:#ececec;border-bottom:2px solid #d6d6d6"></div>
<svg style="position:absolute;left:1004px;top:555px;" width="34" height="34" viewBox="0 0 34 34"><circle cx="17" cy="17" r="14.5" fill="none" stroke="#222" stroke-width="2.4"/><path d="M9.5 17.5 L15 23 L25 11.5" fill="none" stroke="#222" stroke-width="2.6"/></svg>
<div class="t" style="left:1047px;top:555.5px;height:35px;line-height:35px;font-size:27.5px;font-weight:400;color:#111;">Regular:</div>
<div style="left:1159px;top:549px;width:439px;height:46px;background:linear-gradient(#ececec,#dcdcdc);border:2px solid #b5b5b5;border-radius:7px"></div>
<div class="t" style="left:1168px;top:554.5px;height:37px;line-height:37px;font-size:28.5px;font-weight:400;color:#111;">Match one or more patterns</div>
<svg style="position:absolute;left:1570px;top:561px;" width="20" height="14" viewBox="0 0 20 14"><path d="M2 3 L10 11 L18 3" fill="none" stroke="#222" stroke-width="2.4"/></svg>
<div class="t" style="left:1609px;top:556.5px;height:33px;line-height:33px;font-size:26px;font-weight:400;color:#111;">(1)</div>
<svg style="position:absolute;left:1839px;top:564px;" width="26" height="16" viewBox="0 0 26 16"><path d="M2 14 L13 3 L24 14" fill="none" stroke="#222" stroke-width="2.6"/></svg>
<svg style="position:absolute;left:1005px;top:620px;" width="34" height="32" viewBox="0 0 34 32"><path d="M3 9 H10 L12.5 4 H21.5 L24 9 H31 V29 H3 Z" fill="none" stroke="#222" stroke-width="2.2" stroke-linejoin="round"/><circle cx="17" cy="18" r="6" fill="none" stroke="#222" stroke-width="2.2"/></svg>
<div class="t" style="left:1047px;top:622.5px;height:29px;line-height:29px;font-size:23px;font-weight:700;color:#111;">Capture</div>
<svg style="position:absolute;left:1158px;top:620px;" width="34" height="32" viewBox="0 0 34 32"><rect x="2" y="4" width="30" height="24" rx="2" fill="none" stroke="#222" stroke-width="2.2"/><rect x="5" y="7" width="24" height="18" fill="none" stroke="#222" stroke-width="1.4"/><path d="M5 22 L12 14 L18 19 L23 15 L29 21" fill="none" stroke="#222" stroke-width="1.8"/><circle cx="10" cy="11" r="2" fill="none" stroke="#222" stroke-width="1.4"/></svg>
<div class="t" style="left:1200px;top:621.5px;height:31px;line-height:31px;font-size:24px;font-weight:700;color:#111;">Add from Gallery</div>
<svg style="position:absolute;left:1417px;top:620px;" width="34" height="34" viewBox="0 0 34 34"><path d="M14 20 L20 14" stroke="#8e8e8e" stroke-width="2.2"/><path d="M12 15 L6 21 Q2 25 6 29 Q10 33 14 29 L20 23" fill="none" stroke="#8e8e8e" stroke-width="2.2"/><path d="M14 11 L20 5 Q24 1 28 5 Q32 9 28 13 L22 19" fill="none" stroke="#8e8e8e" stroke-width="2.2"/></svg>
<div class="t" style="left:1458px;top:622.5px;height:29px;line-height:29px;font-size:23.05px;font-weight:700;color:#8e8e8e;">Link Group</div>
<svg style="position:absolute;left:1606px;top:620px;" width="32" height="32" viewBox="0 0 32 32"><rect x="2" y="2" width="28" height="28" rx="3" fill="none" stroke="#8e8e8e" stroke-width="2"/></svg>
<div class="t" style="left:1647px;top:622.5px;height:29px;line-height:29px;font-size:22.9px;font-weight:700;color:#9a9a9a;">Clear selection</div>
<svg style="position:absolute;left:1006px;top:675px;" width="32" height="32" viewBox="0 0 32 32"><rect x="2" y="2" width="28" height="28" rx="3" fill="none" stroke="#8e8e8e" stroke-width="2"/><path d="M8 16 H24" stroke="#8e8e8e" stroke-width="2"/></svg>
<div class="t" style="left:1047px;top:678.0px;height:30px;line-height:30px;font-size:23.4px;font-weight:700;color:#9a9a9a;">Delete selection</div>
<div style="left:1243px;top:667px;width:137px;height:47px;background:#ebebeb;border:2px solid #d8d8d8;border-radius:5px"></div>
<svg style="position:absolute;left:1251px;top:675px;" width="34" height="32" viewBox="0 0 34 32"><path d="M2 14 V28 H24 V22" fill="none" stroke="#9a9a9a" stroke-width="2"/><path d="M8 24 Q8 12 22 12 V6 L32 15 L22 24 V18 Q13 18 8 24 Z" fill="none" stroke="#9a9a9a" stroke-width="2" stroke-linejoin="round"/></svg>
<div class="t" style="left:1286px;top:677.5px;height:31px;line-height:31px;font-size:23.9px;font-weight:700;color:#9a9a9a;">Move</div>
<svg style="position:absolute;left:1354px;top:683px;" width="18" height="12" viewBox="0 0 18 12"><path d="M2 2 L9 9 L16 2" fill="none" stroke="#aaa" stroke-width="1.8"/></svg>
<div style="left:1024px;top:751px;width:192px;height:193px;background:#fff;border:2px solid #0a0aee"></div>
<div style="left:1042px;top:803px;width:156px;height:30px;background:#000"></div>
<div class="t" style="left:1042px;top:803px;width:156px;height:30px;line-height:30px;text-align:center;font-family:'Liberation Mono',monospace;font-weight:700;font-size:25px;color:#5fe35f;letter-spacing:-2.4px;text-indent:-2px">Tracking No.</div>
<div style="left:1042px;top:883px;width:156px;height:2px;background:#a8a8a8"></div>
<div class="t" style="left:1055px;top:897.5px;height:29px;line-height:29px;font-size:22.8px;font-weight:400;color:#111;">Pattern1</div>
<svg style="position:absolute;left:1152px;top:895px;" width="36" height="36" viewBox="0 0 36 36"><path d="M4 32 L6 24 L26 4 L32 10 L12 30 Z" fill="none" stroke="#111" stroke-width="2.4" stroke-linejoin="round"/><path d="M22 8 L28 14 M6 24 L12 30" stroke="#111" stroke-width="2.2"/></svg>
<div style="left:991px;top:987px;width:895px;height:371px;border:3px solid #8fb0e8;background:#f7f7f7"></div>
<div style="left:994px;top:990px;width:889px;height:66px;background:#eeeff1;border-bottom:2px solid #d6d6d6"></div>
<div style="left:994px;top:1056px;width:889px;height:114px;background:#ececec;border-bottom:2px solid #d6d6d6"></div>
<svg style="position:absolute;left:1004px;top:1005px;" width="34" height="34" viewBox="0 0 34 34"><circle cx="17" cy="17" r="14.5" fill="none" stroke="#222" stroke-width="2.4"/><path d="M17 8 V20" stroke="#222" stroke-width="3"/><circle cx="17" cy="25" r="2" fill="#222"/></svg>
<div class="t" style="left:1047px;top:1005.5px;height:37px;line-height:37px;font-size:28.8px;font-weight:400;color:#111;">Ignored: Ignore all matches within these patterns (0)</div>
<svg style="position:absolute;left:1838px;top:1013px;" width="26" height="16" viewBox="0 0 26 16"><path d="M2 14 L13 3 L24 14" fill="none" stroke="#222" stroke-width="2.6"/></svg>
<svg style="position:absolute;left:1005px;top:1071px;" width="34" height="32" viewBox="0 0 34 32"><path d="M3 9 H10 L12.5 4 H21.5 L24 9 H31 V29 H3 Z" fill="none" stroke="#222" stroke-width="2.2" stroke-linejoin="round"/><circle cx="17" cy="18" r="6" fill="none" stroke="#222" stroke-width="2.2"/></svg>
<div class="t" style="left:1047px;top:1073.5px;height:29px;line-height:29px;font-size:23px;font-weight:700;color:#111;">Capture</div>
<svg style="position:absolute;left:1158px;top:1071px;" width="34" height="32" viewBox="0 0 34 32"><rect x="2" y="4" width="30" height="24" rx="2" fill="none" stroke="#222" stroke-width="2.2"/><rect x="5" y="7" width="24" height="18" fill="none" stroke="#222" stroke-width="1.4"/><path d="M5 22 L12 14 L18 19 L23 15 L29 21" fill="none" stroke="#222" stroke-width="1.8"/><circle cx="10" cy="11" r="2" fill="none" stroke="#222" stroke-width="1.4"/></svg>
<div class="t" style="left:1200px;top:1072.5px;height:31px;line-height:31px;font-size:24px;font-weight:700;color:#111;">Add from Gallery</div>
<svg style="position:absolute;left:1417px;top:1071px;" width="34" height="34" viewBox="0 0 34 34"><path d="M14 20 L20 14" stroke="#111" stroke-width="2.2"/><path d="M12 15 L6 21 Q2 25 6 29 Q10 33 14 29 L20 23" fill="none" stroke="#111" stroke-width="2.2"/><path d="M14 11 L20 5 Q24 1 28 5 Q32 9 28 13 L22 19" fill="none" stroke="#111" stroke-width="2.2"/></svg>
<div class="t" style="left:1458px;top:1073.5px;height:29px;line-height:29px;font-size:23.05px;font-weight:700;color:#111;">Link Group</div>
<svg style="position:absolute;left:1606px;top:1071px;" width="32" height="32" viewBox="0 0 32 32"><rect x="2" y="2" width="28" height="28" rx="3" fill="none" stroke="#8e8e8e" stroke-width="2"/></svg>
<div class="t" style="left:1647px;top:1073.5px;height:29px;line-height:29px;font-size:22.9px;font-weight:700;color:#9a9a9a;">Clear selection</div>
<svg style="position:absolute;left:1006px;top:1127px;" width="32" height="32" viewBox="0 0 32 32"><rect x="2" y="2" width="28" height="28" rx="3" fill="none" stroke="#8e8e8e" stroke-width="2"/><path d="M8 16 H24" stroke="#8e8e8e" stroke-width="2"/></svg>
<div class="t" style="left:1047px;top:1130.0px;height:30px;line-height:30px;font-size:23.4px;font-weight:700;color:#9a9a9a;">Delete selection</div>
<div style="left:1243px;top:1119px;width:137px;height:47px;background:#ebebeb;border:2px solid #d8d8d8;border-radius:5px"></div>
<svg style="position:absolute;left:1251px;top:1127px;" width="34" height="32" viewBox="0 0 34 32"><path d="M2 14 V28 H24 V22" fill="none" stroke="#9a9a9a" stroke-width="2"/><path d="M8 24 Q8 12 22 12 V6 L32 15 L22 24 V18 Q13 18 8 24 Z" fill="none" stroke="#9a9a9a" stroke-width="2" stroke-linejoin="round"/></svg>
<div class="t" style="left:1286px;top:1129.5px;height:31px;line-height:31px;font-size:23.9px;font-weight:700;color:#9a9a9a;">Move</div>
<svg style="position:absolute;left:1354px;top:1135px;" width="18" height="12" viewBox="0 0 18 12"><path d="M2 2 L9 9 L16 2" fill="none" stroke="#aaa" stroke-width="1.8"/></svg>
<div class="t" style="left:437px;width:2000px;text-align:center;top:1249.0px;height:32px;line-height:32px;font-size:24.8px;font-weight:400;color:#8c8c8c;">Click on &#x27;Capture&#x27; or &#x27;Add from Gallery&#x27; to add patterns.</div>
<div style="left:991px;top:1369px;width:895px;height:171px;border:3px solid #ef7d4d;background:#f7f7f7"></div>
<div style="left:994px;top:1372px;width:889px;height:66px;background:#eeeff1;border-bottom:2px solid #d6d6d6"></div>
<div style="left:994px;top:1438px;width:889px;height:99px;background:#ececec"></div>
<svg style="position:absolute;left:1004px;top:1387px;" width="34" height="34" viewBox="0 0 34 34"><circle cx="17" cy="17" r="14.5" fill="none" stroke="#222" stroke-width="2.4"/><path d="M11 11 L23 23 M23 11 L11 23" stroke="#222" stroke-width="2.4"/></svg>
<div class="t" style="left:1046px;top:1387.0px;height:36px;line-height:36px;font-size:28.2px;font-weight:400;color:#111;">Excluded: Make sure none of these patterns appear (0)</div>
<svg style="position:absolute;left:1839px;top:1395px;" width="26" height="16" viewBox="0 0 26 16"><path d="M2 14 L13 3 L24 14" fill="none" stroke="#222" stroke-width="2.6"/></svg>
<svg style="position:absolute;left:1005px;top:1452px;" width="34" height="32" viewBox="0 0 34 32"><path d="M3 9 H10 L12.5 4 H21.5 L24 9 H31 V29 H3 Z" fill="none" stroke="#222" stroke-width="2.2" stroke-linejoin="round"/><circle cx="17" cy="18" r="6" fill="none" stroke="#222" stroke-width="2.2"/></svg>
<div class="t" style="left:1047px;top:1454.5px;height:29px;line-height:29px;font-size:23px;font-weight:700;color:#111;">Capture</div>
<svg style="position:absolute;left:1158px;top:1452px;" width="34" height="32" viewBox="0 0 34 32"><rect x="2" y="4" width="30" height="24" rx="2" fill="none" stroke="#222" stroke-width="2.2"/><rect x="5" y="7" width="24" height="18" fill="none" stroke="#222" stroke-width="1.4"/><path d="M5 22 L12 14 L18 19 L23 15 L29 21" fill="none" stroke="#222" stroke-width="1.8"/><circle cx="10" cy="11" r="2" fill="none" stroke="#222" stroke-width="1.4"/></svg>
<div class="t" style="left:1200px;top:1453.5px;height:31px;line-height:31px;font-size:24px;font-weight:700;color:#111;">Add from Gallery</div>
<svg style="position:absolute;left:1417px;top:1452px;" width="34" height="34" viewBox="0 0 34 34"><path d="M14 20 L20 14" stroke="#111" stroke-width="2.2"/><path d="M12 15 L6 21 Q2 25 6 29 Q10 33 14 29 L20 23" fill="none" stroke="#111" stroke-width="2.2"/><path d="M14 11 L20 5 Q24 1 28 5 Q32 9 28 13 L22 19" fill="none" stroke="#111" stroke-width="2.2"/></svg>
<div class="t" style="left:1458px;top:1454.5px;height:29px;line-height:29px;font-size:23.05px;font-weight:700;color:#111;">Link Group</div>
<svg style="position:absolute;left:1606px;top:1452px;" width="32" height="32" viewBox="0 0 32 32"><rect x="2" y="2" width="28" height="28" rx="3" fill="none" stroke="#8e8e8e" stroke-width="2"/></svg>
<div class="t" style="left:1647px;top:1454.5px;height:29px;line-height:29px;font-size:22.9px;font-weight:700;color:#9a9a9a;">Clear selection</div>
<div style="left:978px;top:1497px;width:955px;height:48px;background:#f0f0f0"></div>
<div style="left:976px;top:1480px;width:959px;height:25px;border:2px solid #d9d9d9;border-top:none;border-radius:0 0 7px 7px"></div>
<div style="left:1890px;top:1440px;width:34px;height:57px;background:#f7f7f7"></div>
<svg style="position:absolute;left:1895px;top:1470px;" width="22" height="14" viewBox="0 0 22 14"><path d="M2 2 L11 11 L20 2" fill="none" stroke="#555" stroke-width="2"/></svg>
<div class="t" style="left:977px;top:1525.0px;height:30px;line-height:30px;font-size:23.5px;font-weight:400;color:#222;">Error handling:</div>
<div style="left:1145px;top:1518px;width:399px;height:44px;background:linear-gradient(#ececec,#dcdcdc);border:2px solid #b5b5b5;border-radius:6px"></div>
<div class="t" style="left:1153px;top:1525.0px;height:30px;line-height:30px;font-size:23.8px;font-weight:400;color:#222;">Normal</div>
<svg style="position:absolute;left:1514px;top:1533px;" width="20" height="14" viewBox="0 0 20 14"><path d="M2 3 L10 11 L18 3" fill="none" stroke="#222" stroke-width="2.4"/></svg>
<div style="left:1945px;top:449px;width:716px;height:1049px;border:2px solid #d9d9d9;border-radius:7px"></div>
<div style="left:1953px;top:430px;width:212px;height:35px;background:#f0f0f0"></div>
<div class="t" style="left:1958px;top:430.5px;height:33px;line-height:33px;font-size:25.6px;font-weight:700;color:#3c3c3c;">Search Settings</div>
<div class="t" style="left:1966px;top:484.0px;height:30px;line-height:30px;font-size:23.5px;font-weight:400;color:#222;">Required matching precision (%):</div>
<div style="left:2334px;top:478px;width:99px;height:43px;background:#fff;border:2px solid #bdbdbd"></div>
<div class="t" style="left:2343px;top:484.0px;height:30px;line-height:30px;font-size:23.5px;font-weight:400;color:#111;">95</div>
<div style="left:2538px;top:536px;width:61px;height:21px;background:#f4f47c"></div>
<div style="left:2599px;top:536px;width:35px;height:21px;background:#8ce77c"></div>
<svg style="position:absolute;left:0;top:0" width="2732" height="1732"><rect x="1970.0" y="538" width="2" height="8" fill="#555"/><rect x="2003.2" y="538" width="2" height="8" fill="#555"/><rect x="2036.3" y="538" width="2" height="8" fill="#555"/><rect x="2069.4" y="538" width="2" height="8" fill="#555"/><rect x="2102.6" y="538" width="2" height="8" fill="#555"/><rect x="2135.8" y="538" width="2" height="8" fill="#555"/><rect x="2168.9" y="538" width="2" height="8" fill="#555"/><rect x="2202.1" y="538" width="2" height="8" fill="#555"/><rect x="2235.2" y="538" width="2" height="8" fill="#555"/><rect x="2268.3" y="538" width="2" height="8" fill="#555"/><rect x="2301.5" y="538" width="2" height="8" fill="#555"/><rect x="2334.7" y="538" width="2" height="8" fill="#555"/><rect x="2367.8" y="538" width="2" height="8" fill="#555"/><rect x="2400.9" y="538" width="2" height="8" fill="#555"/><rect x="2434.1" y="538" width="2" height="8" fill="#555"/><rect x="2467.2" y="538" width="2" height="8" fill="#555"/><rect x="2500.4" y="538" width="2" height="8" fill="#555"/><rect x="2533.6" y="538" width="2" height="8" fill="#555"/><rect x="2566.7" y="538" width="2" height="8" fill="#555"/><rect x="2599.8" y="538" width="2" height="8" fill="#555"/><rect x="2633.0" y="538" width="2" height="8" fill="#555"/></svg>
<div style="left:1972px;top:562px;width:663px;height:8px;background:#e4e4e4;border:1px solid #c2c2c2;border-radius:4px"></div>
<svg style="position:absolute;left:2588px;top:544px;" width="24" height="38" viewBox="0 0 24 38"><path d="M2 36 V12 L12 2 L22 12 V36 Z" fill="#e2e2e2" stroke="#9e9e9e" stroke-width="2" stroke-linejoin="round"/></svg>
<div style="left:1966px;top:608px;width:28px;height:27px;background:#fff;border:2px solid #777;border-radius:3px"></div>
<svg style="position:absolute;left:1966px;top:608px;" width="28" height="27" viewBox="0 0 28 27"><path d="M6 14 L11.5 19.5 L22 7" fill="none" stroke="#222" stroke-width="3"/></svg>
<div class="t" style="left:2005px;top:607.0px;height:30px;line-height:30px;font-size:23.8px;font-weight:400;color:#222;">Use general timeout</div>
<div class="t" style="left:2251px;top:607.0px;height:30px;line-height:30px;font-size:23.6px;font-weight:400;color:#8a8a8a;">Timeout [sec]:</div>
<div style="left:2428px;top:601px;width:100px;height:42px;background:#f0f0f0;border:2px solid #cfcfcf"></div>
<div class="t" style="left:2437px;top:607.0px;height:30px;line-height:30px;font-size:23.5px;font-weight:400;color:#8a8a8a;">45</div>
<div style="left:1966px;top:677px;width:28px;height:27px;background:#fff;border:2px solid #777;border-radius:3px"></div>
<div class="t" style="left:2005px;top:676.0px;height:30px;line-height:30px;font-size:23.7px;font-weight:400;color:#222;">Check whether found match stays on same location every</div>
<div style="left:2636px;top:668px;width:26px;height:43px;background:#f0f0f0;border:2px solid #cfcfcf;border-right:none"></div>
<div class="t" style="left:2643px;top:676.0px;height:28px;line-height:28px;font-size:22px;font-weight:400;color:#999;">5</div>
<div style="left:2650px;top:666px;width:9px;height:47px;background:#f0f0f0"></div>
<div style="left:1966px;top:740px;width:28px;height:27px;background:#fff;border:2px solid #777;border-radius:3px"></div>
<div class="t" style="left:2005px;top:738.5px;height:31px;line-height:31px;font-size:24.3px;font-weight:400;color:#222;">Allow multiple matches of a found pattern.</div>
<div style="left:1966px;top:805px;width:28px;height:27px;background:#fff;border:2px solid #777;border-radius:3px"></div>
<div class="t" style="left:2005px;top:804.0px;height:30px;line-height:30px;font-size:23.7px;font-weight:400;color:#222;">Move mouse to 0,0 while pattern search is active.</div>
<div style="left:1945px;top:1503px;width:716px;height:3px;border-top:2px solid #d9d9d9"></div>
<div style="left:1959px;top:873px;width:686px;height:608px;border:2px solid #d9d9d9;border-radius:7px"></div>
<div style="left:1971px;top:855px;width:164px;height:35px;background:#f0f0f0"></div>
<div class="t" style="left:1984px;top:857.5px;height:29px;line-height:29px;font-size:22.9px;font-weight:700;color:#2a2a2a;">Search Area</div>
<svg style="position:absolute;left:1975px;top:906px;" width="38" height="36" viewBox="0 0 38 36"><rect x="10" y="10" width="16" height="17" fill="#8a8a8a"/><path d="M9 3 V27 H34 M2 10 H27 V34" fill="none" stroke="#555" stroke-width="4" stroke-linecap="round"/><path d="M10 25 L32 3" stroke="#111" stroke-width="1.8"/></svg>
<div class="t" style="left:2019px;top:910.0px;height:30px;line-height:30px;font-size:23.6px;font-weight:400;color:#222;">Define manually</div>
<svg style="position:absolute;left:2203px;top:908px;" width="36" height="36" viewBox="0 0 36 36"><path d="M4 33 L1 30 L26 5 L30 9 Z" fill="none" stroke="#222" stroke-width="2.2" stroke-linejoin="round"/><path d="M20 11 L24 15" stroke="#222" stroke-width="2"/><circle cx="4" cy="5" r="1.6" fill="#222"/><circle cx="10" cy="3" r="1.4" fill="none" stroke="#222"/><circle cx="16" cy="5" r="1.6" fill="#222"/><path d="M30 20 L33 23 L30 26 L27 23 Z" fill="#222"/></svg>
<div class="t" style="left:2246px;top:909.5px;height:31px;line-height:31px;font-size:24px;font-weight:400;color:#222;">Define automatically</div>
<svg style="position:absolute;left:2477px;top:909px;" width="34" height="34" viewBox="0 0 34 34"><path d="M3 3 L31 31 M31 3 L3 31" stroke="#111" stroke-width="4"/></svg>
<div class="t" style="left:2518px;top:910.0px;height:30px;line-height:30px;font-size:23.2px;font-weight:400;color:#222;">Reset to fu</div>
<div style="left:2003px;top:954px;width:597px;height:375px;background:#9e9e9e;border:3px solid #3c3c3c"></div>
<div style="left:2006px;top:957px;width:591px;height:10px;background:#c8c8c8"></div>
<div style="left:2006px;top:1313px;width:591px;height:13px;background:#c0c0c0"></div>
<svg style="position:absolute;left:0;top:0" width="2732" height="1732"><rect x="2066" y="1007.5" width="4" height="3" fill="#b8e0b0" opacity="0.55"/><rect x="2071" y="1007.5" width="5" height="3" fill="#b8e0b0" opacity="0.55"/><rect x="2077" y="1007.5" width="2" height="3" fill="#b8e0b0" opacity="0.55"/><rect x="2080" y="1007.5" width="4" height="3" fill="#b8e0b0" opacity="0.55"/><rect x="2085" y="1007.5" width="3" height="3" fill="#b8e0b0" opacity="0.55"/><rect x="2089" y="1007.5" width="2" height="3" fill="#b8e0b0" opacity="0.55"/><rect x="2093" y="1007.5" width="5" height="3" fill="#b8e0b0" opacity="0.55"/><rect x="2099" y="1007.5" width="3" height="3" fill="#b8e0b0" opacity="0.55"/><rect x="2103" y="1007.5" width="5" height="3" fill="#b8e0b0" opacity="0.55"/><rect x="2109" y="1007.5" width="2" height="3" fill="#b8e0b0" opacity="0.55"/><rect x="2112" y="1007.5" width="2" height="3" fill="#b8e0b0" opacity="0.55"/><rect x="2116" y="1007.5" width="2" height="3" fill="#b8e0b0" opacity="0.55"/><rect x="2119" y="1007.5" width="2" height="3" fill="#b8e0b0" opacity="0.55"/><rect x="2122" y="1007.5" width="4" height="3" fill="#b8e0b0" opacity="0.55"/><rect x="2128" y="1007.5" width="3" height="3" fill="#b8e0b0" opacity="0.55"/><rect x="2132" y="1007.5" width="4" height="3" fill="#b8e0b0" opacity="0.55"/><rect x="2137" y="1007.5" width="2" height="3" fill="#b8e0b0" opacity="0.55"/><rect x="2140" y="1007.5" width="4" height="3" fill="#b8e0b0" opacity="0.55"/><rect x="2145" y="1007.5" width="2" height="3" fill="#b8e0b0" opacity="0.55"/><rect x="2148" y="1007.5" width="3" height="3" fill="#b8e0b0" opacity="0.55"/><rect x="2153" y="1007.5" width="5" height="3" fill="#b8e0b0" opacity="0.55"/><rect x="2160" y="1007.5" width="5" height="3" fill="#b8e0b0" opacity="0.55"/><rect x="2167" y="1007.5" width="4" height="3" fill="#b8e0b0" opacity="0.55"/><rect x="2173" y="1007.5" width="3" height="3" fill="#b8e0b0" opacity="0.55"/><rect x="2177" y="1007.5" width="1" height="3" fill="#b8e0b0" opacity="0.55"/><rect x="2060" y="1035" width="480" height="1" fill="#b8d0b8" opacity=".6"/><rect x="2060" y="1058.5" width="4" height="3" fill="#b8e0b0" opacity="0.55"/><rect x="2066" y="1058.5" width="4" height="3" fill="#b8e0b0" opacity="0.55"/><rect x="2072" y="1058.5" width="4" height="3" fill="#b8e0b0" opacity="0.55"/><rect x="2077" y="1058.5" width="2" height="3" fill="#b8e0b0" opacity="0.55"/><rect x="2081" y="1058.5" width="3" height="3" fill="#b8e0b0" opacity="0.55"/><rect x="2086" y="1058.5" width="3" height="3" fill="#b8e0b0" opacity="0.55"/><rect x="2091" y="1058.5" width="3" height="3" fill="#b8e0b0" opacity="0.55"/><rect x="2100" y="1047" width="100" height="24" fill="none" stroke="#8c8ca0" stroke-width="1"/><rect x="2060" y="1083" width="480" height="1" fill="#b0c8b0" opacity=".5"/><rect x="2066" y="1112.5" width="2" height="3" fill="#b8e0b0" opacity="0.55"/><rect x="2070" y="1112.5" width="4" height="3" fill="#b8e0b0" opacity="0.55"/><rect x="2076" y="1112.5" width="5" height="3" fill="#b8e0b0" opacity="0.55"/><rect x="2083" y="1112.5" width="2" height="3" fill="#b8e0b0" opacity="0.55"/><rect x="2086" y="1112.5" width="4" height="3" fill="#b8e0b0" opacity="0.55"/><rect x="2092" y="1112.5" width="2" height="3" fill="#b8e0b0" opacity="0.55"/><rect x="2095" y="1112.5" width="3" height="3" fill="#b8e0b0" opacity="0.55"/><rect x="2066" y="1135.5" width="4" height="3" fill="#b8e0b0" opacity="0.55"/><rect x="2072" y="1135.5" width="4" height="3" fill="#b8e0b0" opacity="0.55"/><rect x="2077" y="1135.5" width="5" height="3" fill="#b8e0b0" opacity="0.55"/><rect x="2084" y="1135.5" width="2" height="3" fill="#b8e0b0" opacity="0.55"/><rect x="2124" y="1135.5" width="5" height="3" fill="#b8e0b0" opacity="0.55"/><rect x="2130" y="1135.5" width="3" height="3" fill="#b8e0b0" opacity="0.55"/><rect x="2135" y="1135.5" width="3" height="3" fill="#b8e0b0" opacity="0.55"/><rect x="2139" y="1135.5" width="1" height="3" fill="#b8e0b0" opacity="0.55"/><rect x="2194" y="1135.5" width="5" height="3" fill="#b8e0b0" opacity="0.55"/><rect x="2200" y="1135.5" width="3" height="3" fill="#b8e0b0" opacity="0.55"/><rect x="2205" y="1135.5" width="5" height="3" fill="#b8e0b0" opacity="0.55"/><rect x="2212" y="1135.5" width="3" height="3" fill="#b8e0b0" opacity="0.55"/><rect x="2217" y="1135.5" width="4" height="3" fill="#b8e0b0" opacity="0.55"/><rect x="2223" y="1135.5" width="4" height="3" fill="#b8e0b0" opacity="0.55"/><rect x="2229" y="1135.5" width="3" height="3" fill="#b8e0b0" opacity="0.55"/><rect x="2233" y="1135.5" width="1" height="3" fill="#b8e0b0" opacity="0.55"/><rect x="2066" y="1158.5" width="3" height="3" fill="#b8e0b0" opacity="0.55"/><rect x="2070" y="1158.5" width="3" height="3" fill="#b8e0b0" opacity="0.55"/><rect x="2074" y="1158.5" width="5" height="3" fill="#b8e0b0" opacity="0.55"/><rect x="2080" y="1158.5" width="4" height="3" fill="#b8e0b0" opacity="0.55"/><rect x="2124" y="1158.5" width="2" height="3" fill="#b8e0b0" opacity="0.55"/><rect x="2127" y="1158.5" width="5" height="3" fill="#b8e0b0" opacity="0.55"/><rect x="2134" y="1158.5" width="4" height="3" fill="#b8e0b0" opacity="0.55"/><rect x="2139" y="1158.5" width="1" height="3" fill="#b8e0b0" opacity="0.55"/><rect x="2194" y="1158.5" width="5" height="3" fill="#b8e0b0" opacity="0.55"/><rect x="2201" y="1158.5" width="5" height="3" fill="#b8e0b0" opacity="0.55"/><rect x="2208" y="1158.5" width="2" height="3" fill="#b8e0b0" opacity="0.55"/><rect x="2212" y="1158.5" width="5" height="3" fill="#b8e0b0" opacity="0.55"/><rect x="2218" y="1158.5" width="3" height="3" fill="#b8e0b0" opacity="0.55"/><rect x="2222" y="1158.5" width="3" height="3" fill="#b8e0b0" opacity="0.55"/><rect x="2227" y="1158.5" width="3" height="3" fill="#b8e0b0" opacity="0.55"/><rect x="2231" y="1158.5" width="3" height="3" fill="#b8e0b0" opacity="0.55"/><rect x="2066" y="1181.5" width="2" height="3" fill="#b8e0b0" opacity="0.55"/><rect x="2069" y="1181.5" width="3" height="3" fill="#b8e0b0" opacity="0.55"/><rect x="2073" y="1181.5" width="4" height="3" fill="#b8e0b0" opacity="0.55"/><rect x="2078" y="1181.5" width="2" height="3" fill="#b8e0b0" opacity="0.55"/><rect x="2081" y="1181.5" width="5" height="3" fill="#b8e0b0" opacity="0.55"/><rect x="2124" y="1181.5" width="4" height="3" fill="#b8e0b0" opacity="0.55"/><rect x="2130" y="1181.5" width="4" height="3" fill="#b8e0b0" opacity="0.55"/><rect x="2136" y="1181.5" width="2" height="3" fill="#b8e0b0" opacity="0.55"/><rect x="2139" y="1181.5" width="1" height="3" fill="#b8e0b0" opacity="0.55"/><rect x="2194" y="1181.5" width="5" height="3" fill="#b8e0b0" opacity="0.55"/><rect x="2201" y="1181.5" width="4" height="3" fill="#b8e0b0" opacity="0.55"/><rect x="2206" y="1181.5" width="3" height="3" fill="#b8e0b0" opacity="0.55"/><rect x="2210" y="1181.5" width="4" height="3" fill="#b8e0b0" opacity="0.55"/><rect x="2216" y="1181.5" width="5" height="3" fill="#b8e0b0" opacity="0.55"/><rect x="2222" y="1181.5" width="2" height="3" fill="#b8e0b0" opacity="0.55"/><rect x="2225" y="1181.5" width="4" height="3" fill="#b8e0b0" opacity="0.55"/><rect x="2230" y="1181.5" width="2" height="3" fill="#b8e0b0" opacity="0.55"/><rect x="2066" y="1205.5" width="2" height="3" fill="#b8e0b0" opacity="0.55"/><rect x="2070" y="1205.5" width="4" height="3" fill="#b8e0b0" opacity="0.55"/><rect x="2075" y="1205.5" width="4" height="3" fill="#b8e0b0" opacity="0.55"/><rect x="2080" y="1205.5" width="4" height="3" fill="#b8e0b0" opacity="0.55"/><rect x="2085" y="1205.5" width="1" height="3" fill="#b8e0b0" opacity="0.55"/><rect x="2124" y="1205.5" width="5" height="3" fill="#b8e0b0" opacity="0.55"/><rect x="2130" y="1205.5" width="3" height="3" fill="#b8e0b0" opacity="0.55"/><rect x="2135" y="1205.5" width="4" height="3" fill="#b8e0b0" opacity="0.55"/><rect x="2194" y="1205.5" width="2" height="3" fill="#b8e0b0" opacity="0.55"/><rect x="2198" y="1205.5" width="5" height="3" fill="#b8e0b0" opacity="0.55"/><rect x="2205" y="1205.5" width="3" height="3" fill="#b8e0b0" opacity="0.55"/><rect x="2210" y="1205.5" width="5" height="3" fill="#b8e0b0" opacity="0.55"/><rect x="2217" y="1205.5" width="4" height="3" fill="#b8e0b0" opacity="0.55"/><rect x="2222" y="1205.5" width="3" height="3" fill="#b8e0b0" opacity="0.55"/><rect x="2226" y="1205.5" width="3" height="3" fill="#b8e0b0" opacity="0.55"/><rect x="2231" y="1205.5" width="3" height="3" fill="#b8e0b0" opacity="0.55"/><rect x="2066" y="1229.5" width="3" height="3" fill="#b8e0b0" opacity="0.55"/><rect x="2071" y="1229.5" width="2" height="3" fill="#b8e0b0" opacity="0.55"/><rect x="2075" y="1229.5" width="4" height="3" fill="#b8e0b0" opacity="0.55"/><rect x="2080" y="1229.5" width="2" height="3" fill="#b8e0b0" opacity="0.55"/><rect x="2084" y="1229.5" width="2" height="3" fill="#b8e0b0" opacity="0.55"/><rect x="2124" y="1229.5" width="3" height="3" fill="#b8e0b0" opacity="0.55"/><rect x="2129" y="1229.5" width="4" height="3" fill="#b8e0b0" opacity="0.55"/><rect x="2134" y="1229.5" width="5" height="3" fill="#b8e0b0" opacity="0.55"/><rect x="2194" y="1229.5" width="5" height="3" fill="#b8e0b0" opacity="0.55"/><rect x="2200" y="1229.5" width="3" height="3" fill="#b8e0b0" opacity="0.55"/><rect x="2204" y="1229.5" width="3" height="3" fill="#b8e0b0" opacity="0.55"/><rect x="2208" y="1229.5" width="3" height="3" fill="#b8e0b0" opacity="0.55"/><rect x="2213" y="1229.5" width="3" height="3" fill="#b8e0b0" opacity="0.55"/><rect x="2218" y="1229.5" width="4" height="3" fill="#b8e0b0" opacity="0.55"/><rect x="2223" y="1229.5" width="3" height="3" fill="#b8e0b0" opacity="0.55"/><rect x="2227" y="1229.5" width="2" height="3" fill="#b8e0b0" opacity="0.55"/><rect x="2230" y="1229.5" width="3" height="3" fill="#b8e0b0" opacity="0.55"/><rect x="2060" y="1244" width="480" height="1" fill="#b0d0b0" opacity=".5"/><rect x="2223" y="1259.5" width="3" height="3" fill="#b8e0b0" opacity="0.45"/><rect x="2227" y="1259.5" width="2" height="3" fill="#b8e0b0" opacity="0.45"/><rect x="2231" y="1259.5" width="3" height="3" fill="#b8e0b0" opacity="0.45"/><rect x="2236" y="1259.5" width="3" height="3" fill="#b8e0b0" opacity="0.45"/><rect x="2241" y="1259.5" width="4" height="3" fill="#b8e0b0" opacity="0.45"/><rect x="2247" y="1259.5" width="3" height="3" fill="#b8e0b0" opacity="0.45"/><rect x="2251" y="1259.5" width="4" height="3" fill="#b8e0b0" opacity="0.45"/><rect x="2257" y="1259.5" width="5" height="3" fill="#b8e0b0" opacity="0.45"/><rect x="2263" y="1259.5" width="3" height="3" fill="#b8e0b0" opacity="0.45"/><rect x="2267" y="1259.5" width="5" height="3" fill="#b8e0b0" opacity="0.45"/><rect x="2273" y="1259.5" width="2" height="3" fill="#b8e0b0" opacity="0.45"/><rect x="2276" y="1259.5" width="3" height="3" fill="#b8e0b0" opacity="0.45"/><rect x="2280" y="1259.5" width="5" height="3" fill="#b8e0b0" opacity="0.45"/><rect x="2286" y="1259.5" width="2" height="3" fill="#b8e0b0" opacity="0.45"/><rect x="2290" y="1259.5" width="5" height="3" fill="#b8e0b0" opacity="0.45"/><rect x="2296" y="1259.5" width="2" height="3" fill="#b8e0b0" opacity="0.45"/><rect x="2299" y="1259.5" width="3" height="3" fill="#b8e0b0" opacity="0.45"/><rect x="2304" y="1259.5" width="2" height="3" fill="#b8e0b0" opacity="0.45"/><rect x="2307" y="1259.5" width="5" height="3" fill="#b8e0b0" opacity="0.45"/><rect x="2313" y="1259.5" width="2" height="3" fill="#b8e0b0" opacity="0.45"/><rect x="2317" y="1259.5" width="4" height="3" fill="#b8e0b0" opacity="0.45"/><rect x="2322" y="1259.5" width="4" height="3" fill="#b8e0b0" opacity="0.45"/><rect x="2328" y="1259.5" width="5" height="3" fill="#b8e0b0" opacity="0.45"/><rect x="2334" y="1259.5" width="4" height="3" fill="#b8e0b0" opacity="0.45"/><rect x="2339" y="1259.5" width="5" height="3" fill="#b8e0b0" opacity="0.45"/><rect x="2345" y="1259.5" width="5" height="3" fill="#b8e0b0" opacity="0.45"/><rect x="2351" y="1259.5" width="5" height="3" fill="#b8e0b0" opacity="0.45"/><rect x="2358" y="1259.5" width="4" height="3" fill="#b8e0b0" opacity="0.45"/><rect x="2363" y="1259.5" width="3" height="3" fill="#b8e0b0" opacity="0.45"/><rect x="2368" y="1259.5" width="2" height="3" fill="#b8e0b0" opacity="0.45"/><rect x="2371" y="1259.5" width="4" height="3" fill="#b8e0b0" opacity="0.45"/><rect x="2376" y="1259.5" width="3" height="3" fill="#b8e0b0" opacity="0.45"/><rect x="2381" y="1259.5" width="2" height="3" fill="#b8e0b0" opacity="0.45"/><rect x="2006" y="1287" width="590" height="1" fill="#b4b4b4"/><rect x="2236" y="1296" width="130" height="10" rx="5" fill="#a8a8a8"/><circle cx="2301" cy="1300" r="5" fill="#8fb0d8" opacity=".7"/><rect x="2215" y="1316" width="7" height="6" fill="#9ab" opacity=".5"/><rect x="2232" y="1316" width="7" height="6" fill="#9ab" opacity=".5"/><rect x="2249" y="1316" width="7" height="6" fill="#9ab" opacity=".5"/><rect x="2266" y="1316" width="7" height="6" fill="#9ab" opacity=".5"/><rect x="2283" y="1316" width="7" height="6" fill="#9ab" opacity=".5"/></svg>
<div style="left:2138px;top:1057px;width:178px;height:97px;background:#000;border:2px solid #2020f0"></div>
<div style="left:2208px;top:1051px;width:30px;height:16px;background:#fff"></div>
<div style="left:2245px;top:1051px;width:53px;height:16px;background:#fff"></div>
<svg style="position:absolute;left:0;top:0" width="2732" height="1732"><rect x="2140" y="1112" width="4" height="4" fill="#5ed85e" opacity="0.9"/><rect x="2146" y="1112" width="5" height="4" fill="#5ed85e" opacity="0.9"/><rect x="2153" y="1112" width="4" height="4" fill="#5ed85e" opacity="0.9"/><rect x="2159" y="1112" width="5" height="4" fill="#5ed85e" opacity="0.9"/><rect x="2166" y="1112" width="3" height="4" fill="#5ed85e" opacity="0.9"/><rect x="2194" y="1111" width="6" height="5" fill="#5ed85e" opacity="0.9"/><rect x="2202" y="1112" width="5" height="4" fill="#5ed85e" opacity="0.9"/><rect x="2209" y="1112" width="4" height="4" fill="#5ed85e" opacity="0.9"/><rect x="2215" y="1112" width="5" height="4" fill="#5ed85e" opacity="0.9"/><rect x="2222" y="1111" width="4" height="5" fill="#5ed85e" opacity="0.9"/><rect x="2230" y="1112" width="5" height="4" fill="#5ed85e" opacity="0.9"/><rect x="2237" y="1112" width="4" height="4" fill="#5ed85e" opacity="0.9"/><rect x="2194" y="1135" width="4" height="3" fill="#5ed85e" opacity="0.6"/><rect x="2200" y="1135" width="5" height="3" fill="#5ed85e" opacity="0.6"/><rect x="2207" y="1135" width="4" height="3" fill="#5ed85e" opacity="0.6"/><rect x="2213" y="1135" width="5" height="3" fill="#5ed85e" opacity="0.6"/><rect x="2220" y="1135" width="4" height="3" fill="#5ed85e" opacity="0.6"/><rect x="2226" y="1135" width="5" height="3" fill="#5ed85e" opacity="0.6"/><rect x="2220" y="1066" width="76" height="1" fill="#555"/></svg>
<div class="t" style="left:1980px;top:1348.0px;height:30px;line-height:30px;font-size:23.3px;font-weight:400;color:#222;">The search area is currently set to:</div>
<div class="t" style="left:1980px;top:1379.5px;height:29px;line-height:29px;font-size:23px;font-weight:400;color:#222;">Fixed position 388;292, size: 517x282.</div>
<div class="t" style="left:1980px;top:1431.5px;height:29px;line-height:29px;font-size:22.7px;font-weight:400;color:#222;">Relative To</div>
<div style="left:2134px;top:1424px;width:498px;height:42px;background:linear-gradient(#ececec,#dcdcdc);border:2px solid #b5b5b5;border-radius:6px"></div>
<div class="t" style="left:2151px;top:1430.5px;height:31px;line-height:31px;font-size:24.6px;font-weight:700;color:#111;">&lt; None &gt;</div>
<svg style="position:absolute;left:2596px;top:1436px;" width="20" height="12" viewBox="0 0 20 12"><path d="M1 1 H19 L10 11 Z" fill="#111"/></svg>
<div style="left:2275px;top:1515px;width:118px;height:49px;background:#e1e1e1;border:2px solid #b4b4b4;border-radius:6px"></div>
<div class="t" style="left:1334.0px;width:2000px;text-align:center;top:1524.5px;height:31px;line-height:31px;font-size:24px;font-weight:400;color:#222;">Test</div>
<div style="left:2408px;top:1515px;width:120px;height:49px;background:#e1e1e1;border:2px solid #6e6e6e;border-radius:6px"></div>
<div class="t" style="left:1468.0px;width:2000px;text-align:center;top:1524.5px;height:31px;line-height:31px;font-size:24px;font-weight:400;color:#222;">OK</div>
<div style="left:2542px;top:1515px;width:120px;height:49px;background:#e1e1e1;border:2px solid #b4b4b4;border-radius:6px"></div>
<div class="t" style="left:1602.0px;width:2000px;text-align:center;top:1524.5px;height:31px;line-height:31px;font-size:24px;font-weight:400;color:#222;">Cancel</div>
<div style="left:954px;top:234px;width:1730px;height:1350px;border:10px solid #1530f2"></div>
<div style="left:187px;top:511px;width:650px;height:66px;border:9px solid #1530f2"></div>
<div style="left:986px;top:601px;width:267px;height:370px;border:9px solid #1530f2"></div>
<svg style="position:absolute;left:0;top:0" width="2732" height="1732"><path d="M832 515.5 L958.5 238" stroke="#1530f2" stroke-width="9.5" fill="none"/><path d="M832 572 L958.5 1580" stroke="#1530f2" stroke-width="9.5" fill="none"/></svg>
</body></html>
